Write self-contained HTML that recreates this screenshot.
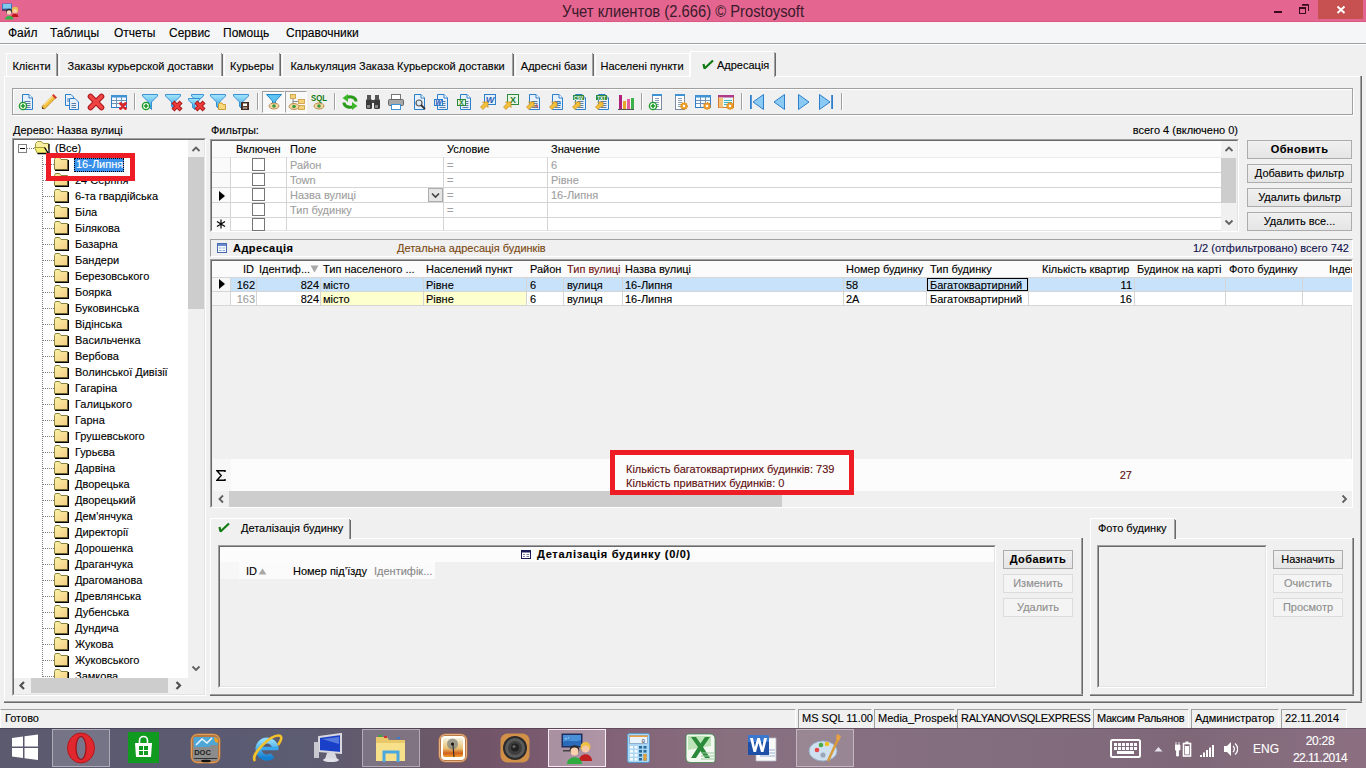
<!DOCTYPE html><html><head><meta charset="utf-8"><style>
html,body{margin:0;padding:0;width:1366px;height:768px;overflow:hidden;background:#F0F0F0;font-family:'Liberation Sans', sans-serif;font-size:11px;position:relative}
div{box-sizing:border-box}
body div{-webkit-text-stroke:0.12px currentColor}
.sv{position:absolute}
</style></head><body>
<div style="position:absolute;left:0px;top:0px;width:1366px;height:22px;background:#E4658F"></div>
<div style="position:absolute;left:0px;top:21px;width:1366px;height:1px;background:#D65C84"></div>
<div style="position:absolute;left:562px;top:3px;font-size:16px;line-height:18px;color:#3A1A2C;white-space:nowrap;-webkit-text-stroke:0;transform:scaleX(0.923);transform-origin:0 0">Учет клиентов (2.666) © Prostoysoft</div>
<div style="position:absolute;left:1318px;top:0px;width:45px;height:19px;background:#C75050"></div>
<svg class="sv" style="left:1318px;top:0" width="45" height="19"><path d="M19.5 6.5 L26.5 13 M26.5 6.5 L19.5 13" stroke="#fff" stroke-width="2"/></svg>
<div style="position:absolute;left:1274px;top:11px;width:8px;height:2px;background:#3a0a1e"></div>
<svg class="sv" style="left:1297px;top:2px" width="14" height="14"><rect x="2.5" y="5.5" width="6" height="6" fill="none" stroke="#3a0a1e"/><rect x="2" y="5" width="7" height="2" fill="#3a0a1e"/><path d="M5 2.5 H11.5 V9" fill="none" stroke="#3a0a1e"/><path d="M5 3 H11" stroke="#3a0a1e" stroke-width="1.5"/></svg>
<svg class="sv" style="left:2px;top:3px" width="18" height="17"><rect x="0" y="0.5" width="10" height="7" fill="#3A78C0"/><rect x="1" y="1" width="8" height="4.5" fill="#7FC8EE"/><rect x="0" y="6.5" width="10" height="1.2" fill="#5A2040"/><circle cx="13" cy="7" r="3.2" fill="#E8C050"/><circle cx="13" cy="8" r="2" fill="#F5D0B0"/><path d="M9.5 14 C9.5 9.5 16.5 9.5 16.5 14 Z" fill="#C01818"/><circle cx="7" cy="8.5" r="2.8" fill="#2A2A2A"/><circle cx="7" cy="9.5" r="2.3" fill="#F5D8C0"/><path d="M3 16.5 C3 11.5 11.5 11.5 11.5 16.5 Z" fill="#3AB04A"/></svg>
<div style="position:absolute;left:0px;top:22px;width:1366px;height:21px;background:#F5F6F7"></div>
<div style="position:absolute;left:0px;top:22px;width:1366px;height:1px;background:#FCEFF5"></div>
<div style="position:absolute;left:0px;top:43px;width:1366px;height:1px;background:#A0A0A0"></div>
<div style="position:absolute;left:0px;top:44px;width:1366px;height:1px;background:#FFFFFF"></div>
<div style="position:absolute;left:8px;top:26px;font-size:12px;line-height:14px;color:#000;white-space:nowrap;">Файл</div>
<div style="position:absolute;left:50px;top:26px;font-size:12px;line-height:14px;color:#000;white-space:nowrap;">Таблицы</div>
<div style="position:absolute;left:114px;top:26px;font-size:12px;line-height:14px;color:#000;white-space:nowrap;">Отчеты</div>
<div style="position:absolute;left:169px;top:26px;font-size:12px;line-height:14px;color:#000;white-space:nowrap;">Сервис</div>
<div style="position:absolute;left:223px;top:26px;font-size:12px;line-height:14px;color:#000;white-space:nowrap;">Помощь</div>
<div style="position:absolute;left:286px;top:26px;font-size:12px;line-height:14px;color:#000;white-space:nowrap;">Справочники</div>
<div style="position:absolute;left:6px;top:53px;width:52px;height:23px;border-top:1px solid #fff;border-left:1px solid #fff;"></div>
<div style="position:absolute;left:56px;top:53px;width:1px;height:23px;background:#A0A0A0"></div>
<div style="position:absolute;left:57px;top:54px;width:1px;height:22px;background:#696969"></div>
<div style="position:absolute;left:6px;top:60px;width:51px;text-align:center;font-size:11px;line-height:13px;white-space:nowrap">Клієнти</div>
<div style="position:absolute;left:59px;top:53px;width:164px;height:23px;border-top:1px solid #fff;border-left:1px solid #fff;"></div>
<div style="position:absolute;left:221px;top:53px;width:1px;height:23px;background:#A0A0A0"></div>
<div style="position:absolute;left:222px;top:54px;width:1px;height:22px;background:#696969"></div>
<div style="position:absolute;left:59px;top:60px;width:163px;text-align:center;font-size:11px;line-height:13px;white-space:nowrap">Заказы курьерской доставки</div>
<div style="position:absolute;left:224px;top:53px;width:57px;height:23px;border-top:1px solid #fff;border-left:1px solid #fff;"></div>
<div style="position:absolute;left:279px;top:53px;width:1px;height:23px;background:#A0A0A0"></div>
<div style="position:absolute;left:280px;top:54px;width:1px;height:22px;background:#696969"></div>
<div style="position:absolute;left:224px;top:60px;width:56px;text-align:center;font-size:11px;line-height:13px;white-space:nowrap">Курьеры</div>
<div style="position:absolute;left:282px;top:53px;width:232px;height:23px;border-top:1px solid #fff;border-left:1px solid #fff;"></div>
<div style="position:absolute;left:512px;top:53px;width:1px;height:23px;background:#A0A0A0"></div>
<div style="position:absolute;left:513px;top:54px;width:1px;height:22px;background:#696969"></div>
<div style="position:absolute;left:282px;top:60px;width:231px;text-align:center;font-size:11px;line-height:13px;white-space:nowrap">Калькуляция Заказа Курьерской доставки</div>
<div style="position:absolute;left:515px;top:53px;width:79px;height:23px;border-top:1px solid #fff;border-left:1px solid #fff;"></div>
<div style="position:absolute;left:592px;top:53px;width:1px;height:23px;background:#A0A0A0"></div>
<div style="position:absolute;left:593px;top:54px;width:1px;height:22px;background:#696969"></div>
<div style="position:absolute;left:515px;top:60px;width:78px;text-align:center;font-size:11px;line-height:13px;white-space:nowrap">Адресні бази</div>
<div style="position:absolute;left:595px;top:53px;width:95px;height:23px;border-top:1px solid #fff;border-left:1px solid #fff;"></div>
<div style="position:absolute;left:689px;top:53px;width:1px;height:23px;background:#fff"></div>
<div style="position:absolute;left:595px;top:60px;width:94px;text-align:center;font-size:11px;line-height:13px;white-space:nowrap">Населені пункти</div>
<div style="position:absolute;left:690px;top:51px;width:86px;height:26px;background:#F0F0F0;border-top:1px solid #fff;border-left:1px solid #fff;"></div>
<div style="position:absolute;left:774px;top:52px;width:1px;height:25px;background:#A0A0A0"></div>
<div style="position:absolute;left:775px;top:53px;width:1px;height:23px;background:#696969"></div>
<svg class="sv" style="left:702px;top:59px" width="12" height="11"><path d="M1.5 5 L2.5 9.5 L11 1.5" fill="none" stroke="#127A12" stroke-width="2.2" stroke-linejoin="bevel"/></svg>
<div style="position:absolute;left:717px;top:59px;font-size:11px;line-height:13px;color:#000;white-space:nowrap;">Адресація</div>
<div style="position:absolute;left:4px;top:76px;width:686px;height:1px;background:#fff"></div>
<div style="position:absolute;left:776px;top:76px;width:586px;height:1px;background:#fff"></div>
<div style="position:absolute;left:4px;top:76px;width:1px;height:627px;background:#fff"></div>
<div style="position:absolute;left:1360px;top:76px;width:1px;height:627px;background:#A0A0A0"></div>
<div style="position:absolute;left:1361px;top:76px;width:1px;height:627px;background:#696969"></div>
<div style="position:absolute;left:4px;top:701px;width:1358px;height:1px;background:#A0A0A0"></div>
<div style="position:absolute;left:4px;top:702px;width:1358px;height:1px;background:#696969"></div>
<div style="position:absolute;left:13px;top:89px;width:1341px;height:27px;border:1px solid #fff;"></div>
<div style="position:absolute;left:12px;top:88px;width:1341px;height:27px;border:1px solid #A0A0A0;"></div>
<div style="position:absolute;left:134px;top:93px;width:1px;height:17px;background:#A0A0A0"></div>
<div style="position:absolute;left:135px;top:93px;width:1px;height:17px;background:#fff"></div>
<div style="position:absolute;left:257px;top:93px;width:1px;height:17px;background:#A0A0A0"></div>
<div style="position:absolute;left:258px;top:93px;width:1px;height:17px;background:#fff"></div>
<div style="position:absolute;left:334px;top:93px;width:1px;height:17px;background:#A0A0A0"></div>
<div style="position:absolute;left:335px;top:93px;width:1px;height:17px;background:#fff"></div>
<div style="position:absolute;left:641px;top:93px;width:1px;height:17px;background:#A0A0A0"></div>
<div style="position:absolute;left:642px;top:93px;width:1px;height:17px;background:#fff"></div>
<div style="position:absolute;left:741px;top:93px;width:1px;height:17px;background:#A0A0A0"></div>
<div style="position:absolute;left:742px;top:93px;width:1px;height:17px;background:#fff"></div>
<div style="position:absolute;left:841px;top:93px;width:1px;height:17px;background:#A0A0A0"></div>
<div style="position:absolute;left:842px;top:93px;width:1px;height:17px;background:#fff"></div>
<div style="position:absolute;left:262px;top:91px;width:23px;height:22px;border-top:1px solid #A0A0A0;border-left:1px solid #A0A0A0;border-right:1px solid #fff;border-bottom:1px solid #fff;background:#F8F8F8"></div>
<div style="position:absolute;left:285px;top:91px;width:22px;height:22px;border-top:1px solid #A0A0A0;border-left:1px solid #A0A0A0;border-right:1px solid #fff;border-bottom:1px solid #fff;background:#F8F8F8"></div>
<svg class="sv" style="left:19px;top:94px" width="16" height="16" viewBox="0 0 16 16" overflow="visible"><path d="M3.5 0.5 H10 L13.5 4 V15.5 H3.5 Z" fill="#E6F1FB" stroke="#2E7FCB"/><path d="M10 0.5 V4 H13.5" fill="#fff" stroke="#2E7FCB"/><path d="M5.5 7.5 H11.5 M5.5 9.5 H11.5 M5.5 11.5 H11.5 M5.5 13.5 H11.5" stroke="#5a7fa6"/><circle cx="4" cy="12" r="3.6" fill="#fff" stroke="#1E9A2A" stroke-width="1.4"/><path d="M1.7999999999999998 12 H6.2 M4 9.8 V14.2" stroke="#1E9A2A" stroke-width="1.6"/></svg>
<svg class="sv" style="left:41px;top:94px" width="16" height="16" viewBox="0 0 16 16" overflow="visible"><path d="M3.5 15 L1.5 14.5 L1 12.5 L11.5 2 L14 4.5 Z" fill="#F3BE3A" stroke="#B8801A" stroke-width="0.8"/><path d="M3 11 L12.5 1.5" stroke="#FCE38A" stroke-width="1.2"/><path d="M11 1.5 L12.5 0 L16 3.5 L14.5 5 Z" fill="#D33A2A"/><path d="M1 12.5 L1 15 L3.5 15 Z" fill="#5a4a3a"/></svg>
<svg class="sv" style="left:64px;top:94px" width="16" height="16" viewBox="0 0 16 16" overflow="visible"><path d="M1.5 0.5 H7 L9.5 3 V11.5 H1.5 Z" fill="#E6F1FB" stroke="#2E7FCB"/><path d="M5.5 4.5 H11 L14.5 8 V15.5 H5.5 Z" fill="#E6F1FB" stroke="#2E7FCB"/><path d="M7.5 9.5 H12 M7.5 11.5 H12 M7.5 13.5 H12 M3 5 H5 M3 7 H5" stroke="#5a7fa6"/></svg>
<svg class="sv" style="left:88px;top:94px" width="16" height="16" viewBox="0 0 16 16" overflow="visible"><path d="M2.5 2.5 L13.5 13.5 M13.5 2.5 L2.5 13.5" stroke="#A8161A" stroke-width="5.6" stroke-linecap="round"/><path d="M2.5 2.5 L13.5 13.5 M13.5 2.5 L2.5 13.5" stroke="#F04444" stroke-width="3.6" stroke-linecap="round"/></svg>
<svg class="sv" style="left:111px;top:94px" width="16" height="16" viewBox="0 0 16 16" overflow="visible"><rect x="0.5" y="1.5" width="15" height="12" fill="#F4FAFF" stroke="#2E7FCB"/><rect x="0" y="1" width="16" height="2.5" fill="#3D93D6"/><path d="M1 6.5 H15 M1 9.5 H15 M5.5 3 V13 M10.5 3 V13" stroke="#6D93B8"/><path d="M9.5 9.5 L14.5 14.5 M14.5 9.5 L9.5 14.5" stroke="#D8262A" stroke-width="3" stroke-linecap="round"/></svg>
<svg class="sv" style="left:142px;top:94px" width="16" height="16" viewBox="0 0 16 16" overflow="visible"><defs><linearGradient id="fung" x1="0" y1="0" x2="0" y2="1"><stop offset="0" stop-color="#A6E6FC"/><stop offset="1" stop-color="#2E9EE0"/></linearGradient></defs><path d="M0.5 0.5 H15.5 V2 L9.5 8 V15.5 L6.5 12.5 V8 L0.5 2 Z" fill="url(#fung)" stroke="#2A88D0" stroke-width="0.9"/><circle cx="4" cy="12" r="3.6" fill="#fff" stroke="#1E9A2A" stroke-width="1.4"/><path d="M1.7999999999999998 12 H6.2 M4 9.8 V14.2" stroke="#1E9A2A" stroke-width="1.6"/></svg>
<svg class="sv" style="left:165px;top:94px" width="16" height="16" viewBox="0 0 16 16" overflow="visible"><defs><linearGradient id="fung" x1="0" y1="0" x2="0" y2="1"><stop offset="0" stop-color="#A6E6FC"/><stop offset="1" stop-color="#2E9EE0"/></linearGradient></defs><path d="M0.5 0.5 H15.5 V2 L9.5 8 V15.5 L6.5 12.5 V8 L0.5 2 Z" fill="url(#fung)" stroke="#2A88D0" stroke-width="0.9"/><path d="M9.4 9.4 L14.6 14.6 M14.6 9.4 L9.4 14.6" stroke="#A81818" stroke-width="4.2" stroke-linecap="square"/><path d="M9.4 9.4 L14.6 14.6 M14.6 9.4 L9.4 14.6" stroke="#EE3A3A" stroke-width="2.4" stroke-linecap="square"/></svg>
<svg class="sv" style="left:188px;top:94px" width="16" height="16" viewBox="0 0 16 16" overflow="visible"><defs><linearGradient id="fung" x1="0" y1="0" x2="0" y2="1"><stop offset="0" stop-color="#A6E6FC"/><stop offset="1" stop-color="#2E9EE0"/></linearGradient></defs><path d="M3.5 0.5 H15.5 V2 L10.5 6.5 V13 L8 11 V6.5 L3.5 2 Z" fill="url(#fung)" stroke="#2A88D0" stroke-width="0.9"/><path d="M0.5 4.5 H11.5 V6 L7 10 V15.5 L4.5 13.5 V10 L0.5 6 Z" fill="url(#fung)" stroke="#2A88D0" stroke-width="0.9"/><path d="M9.4 9.4 L14.6 14.6 M14.6 9.4 L9.4 14.6" stroke="#A81818" stroke-width="4.2" stroke-linecap="square"/><path d="M9.4 9.4 L14.6 14.6 M14.6 9.4 L9.4 14.6" stroke="#EE3A3A" stroke-width="2.4" stroke-linecap="square"/></svg>
<svg class="sv" style="left:210px;top:94px" width="16" height="16" viewBox="0 0 16 16" overflow="visible"><defs><linearGradient id="fung" x1="0" y1="0" x2="0" y2="1"><stop offset="0" stop-color="#A6E6FC"/><stop offset="1" stop-color="#2E9EE0"/></linearGradient></defs><path d="M0.5 0.5 H15.5 V2 L9.5 8 V15.5 L6.5 12.5 V8 L0.5 2 Z" fill="url(#fung)" stroke="#2A88D0" stroke-width="0.9"/><path d="M8.5 15.5 V10 L9.5 9 H12 L13 10.5 H15.5 V15.5 Z" fill="#F8D878" stroke="#C9962A" stroke-width="0.9"/></svg>
<svg class="sv" style="left:233px;top:94px" width="16" height="16" viewBox="0 0 16 16" overflow="visible"><defs><linearGradient id="fung" x1="0" y1="0" x2="0" y2="1"><stop offset="0" stop-color="#A6E6FC"/><stop offset="1" stop-color="#2E9EE0"/></linearGradient></defs><path d="M0.5 0.5 H15.5 V2 L9.5 8 V15.5 L6.5 12.5 V8 L0.5 2 Z" fill="url(#fung)" stroke="#2A88D0" stroke-width="0.9"/><rect x="8.5" y="8.5" width="7" height="7" fill="#5A3A2A" stroke="#3E2A20"/><rect x="10" y="9.5" width="4" height="2.5" fill="#fff"/><rect x="10" y="13" width="4" height="2" fill="#9a8a80"/></svg>
<svg class="sv" style="left:266px;top:94px" width="16" height="16" viewBox="0 0 16 16" overflow="visible"><path d="M0.5 0.5 H15.5 L9.5 7 V9 H6.5 V7 Z" fill="#5EC3F0" stroke="#1C86C9"/><ellipse cx="8" cy="12" rx="5" ry="3" fill="#F2D7A6" stroke="#B07A30" stroke-width="0.8"/><circle cx="8" cy="12" r="1.8" fill="#3C9A3C"/></svg>
<svg class="sv" style="left:289px;top:94px" width="16" height="16" viewBox="0 0 16 16" overflow="visible"><rect x="1.5" y="0.5" width="5" height="4" fill="#F5D27A" stroke="#C99A3A" stroke-width="0.8"/><rect x="9.5" y="5.5" width="6" height="4" fill="#F5D27A" stroke="#C99A3A" stroke-width="0.8"/><rect x="9.5" y="11.5" width="6" height="4" fill="#F5D27A" stroke="#C99A3A" stroke-width="0.8"/><path d="M4 5 V13.5 H9 M4 7.5 H9" stroke="#888" fill="none"/><ellipse cx="5" cy="12.5" rx="5" ry="3" fill="#F2D7A6" stroke="#B07A30" stroke-width="0.8"/><circle cx="5" cy="12.5" r="1.8" fill="#3C9A3C"/></svg>
<svg class="sv" style="left:311px;top:94px" width="16" height="16" viewBox="0 0 16 16" overflow="visible"><text x="8" y="7" font-family="Liberation Sans" font-weight="bold" font-size="8.5" fill="#137A13" text-anchor="middle" textLength="16" lengthAdjust="spacingAndGlyphs">SQL</text><ellipse cx="8" cy="12" rx="5" ry="3" fill="#F2D7A6" stroke="#B07A30" stroke-width="0.8"/><circle cx="8" cy="12" r="1.8" fill="#3C9A3C"/></svg>
<svg class="sv" style="left:342px;top:94px" width="16" height="16" viewBox="0 0 16 16" overflow="visible"><path d="M14 7.5 C14 3 8 2 5 3.5" fill="none" stroke="#2A9A1A" stroke-width="3"/><path d="M0.5 4 L6 0 V8 Z" fill="#3CB82A"/><path d="M2 8.5 C2 13 8 14 11 12.5" fill="none" stroke="#2A9A1A" stroke-width="3"/><path d="M15.5 12 L10 16 V8 Z" fill="#3CB82A"/></svg>
<svg class="sv" style="left:365px;top:94px" width="16" height="16" viewBox="0 0 16 16" overflow="visible"><rect x="1" y="5" width="6" height="10" rx="1.5" fill="#3A3A3A"/><rect x="9" y="5" width="6" height="10" rx="1.5" fill="#3A3A3A"/><rect x="2" y="1" width="4" height="5" fill="#555"/><rect x="10" y="1" width="4" height="5" fill="#555"/><rect x="6" y="6" width="4" height="3" fill="#444"/><rect x="2" y="11" width="3" height="3" fill="#888"/><rect x="10" y="11" width="3" height="3" fill="#888"/></svg>
<svg class="sv" style="left:388px;top:94px" width="16" height="16" viewBox="0 0 16 16" overflow="visible"><rect x="3.5" y="0.5" width="9" height="5" fill="#fff" stroke="#777"/><rect x="0.5" y="5.5" width="15" height="6" rx="1" fill="#A8A8A8" stroke="#666"/><rect x="3.5" y="10.5" width="9" height="5" fill="#fff" stroke="#3D93D6"/></svg>
<svg class="sv" style="left:411px;top:94px" width="16" height="16" viewBox="0 0 16 16" overflow="visible"><path d="M3.5 0.5 H10 L13.5 4 V15.5 H3.5 Z" fill="#E6F1FB" stroke="#2E7FCB"/><path d="M10 0.5 V4 H13.5" fill="#fff" stroke="#2E7FCB"/><circle cx="8" cy="9" r="3" fill="#DDEBF5" stroke="#555" stroke-width="1.2"/><path d="M10 11 L14 15" stroke="#333" stroke-width="1.8"/></svg>
<svg class="sv" style="left:434px;top:94px" width="16" height="16" viewBox="0 0 16 16" overflow="visible"><path d="M3.5 0.5 H10 L13.5 4 V15.5 H3.5 Z" fill="#E6F1FB" stroke="#2E7FCB"/><path d="M10 0.5 V4 H13.5" fill="#fff" stroke="#2E7FCB"/><path d="M5.5 7.5 H11.5 M5.5 9.5 H11.5 M5.5 11.5 H11.5 M5.5 13.5 H11.5" stroke="#5a7fa6"/><rect x="0.5" y="5.5" width="8" height="6" fill="#D8ECFA" stroke="#2E7FCB"/><text x="4.5" y="10.5" font-family="Liberation Sans" font-weight="bold" font-style="italic" font-size="6.5" fill="#1A4FB0" text-anchor="middle">W</text></svg>
<svg class="sv" style="left:457px;top:94px" width="16" height="16" viewBox="0 0 16 16" overflow="visible"><path d="M3.5 0.5 H10 L13.5 4 V15.5 H3.5 Z" fill="#E6F1FB" stroke="#2E7FCB"/><path d="M10 0.5 V4 H13.5" fill="#fff" stroke="#2E7FCB"/><path d="M5.5 7.5 H11.5 M5.5 9.5 H11.5 M5.5 11.5 H11.5 M5.5 13.5 H11.5" stroke="#5a7fa6"/><rect x="0.5" y="5.5" width="8" height="6" fill="#E0F4E0" stroke="#2A8A3A"/><text x="4.5" y="10.5" font-family="Liberation Sans" font-weight="bold" font-size="6.5" fill="#1A7A2A" text-anchor="middle">X</text></svg>
<svg class="sv" style="left:480px;top:94px" width="16" height="16" viewBox="0 0 16 16" overflow="visible"><rect x="4.5" y="0.5" width="11" height="10" fill="#E6F1FB" stroke="#2E7FCB"/><text x="10" y="9" font-family="Liberation Sans" font-weight="bold" font-style="italic" font-size="9" fill="#2B5FB8" text-anchor="middle">W</text><path d="M0.5 13 L4 9.5 L2.5 8 H8 V13.5 L6.5 12 L3 15.5 Z" fill="#F2C03A" stroke="#C88A1A" stroke-width="0.7"/></svg>
<svg class="sv" style="left:503px;top:94px" width="16" height="16" viewBox="0 0 16 16" overflow="visible"><rect x="4.5" y="0.5" width="11" height="10" fill="#E8F5E8" stroke="#2E8B3E"/><text x="10" y="9" font-family="Liberation Sans" font-weight="bold" font-size="9" fill="#1D7A2D" text-anchor="middle">X</text><path d="M0.5 13 L4 9.5 L2.5 8 H8 V13.5 L6.5 12 L3 15.5 Z" fill="#F2C03A" stroke="#C88A1A" stroke-width="0.7"/></svg>
<svg class="sv" style="left:526px;top:94px" width="16" height="16" viewBox="0 0 16 16" overflow="visible"><path d="M3.5 0.5 H10 L13.5 4 V15.5 H3.5 Z" fill="#E6F1FB" stroke="#2E7FCB"/><path d="M10 0.5 V4 H13.5" fill="#fff" stroke="#2E7FCB"/><path d="M5.5 7.5 H11.5 M5.5 9.5 H11.5 M5.5 11.5 H11.5 M5.5 13.5 H11.5" stroke="#5a7fa6"/><text x="10.5" y="14" font-family="Liberation Serif" font-style="italic" font-size="7" fill="#C33" text-anchor="middle">A</text><path d="M0.5 13 L4 9.5 L2.5 8 H8 V13.5 L6.5 12 L3 15.5 Z" fill="#F2C03A" stroke="#C88A1A" stroke-width="0.7"/></svg>
<svg class="sv" style="left:549px;top:94px" width="16" height="16" viewBox="0 0 16 16" overflow="visible"><path d="M3.5 0.5 H10 L13.5 4 V15.5 H3.5 Z" fill="#E6F1FB" stroke="#2E7FCB"/><path d="M10 0.5 V4 H13.5" fill="#fff" stroke="#2E7FCB"/><path d="M5.5 7.5 H11.5 M5.5 9.5 H11.5 M5.5 11.5 H11.5 M5.5 13.5 H11.5" stroke="#5a7fa6"/><text x="9.5" y="12" font-family="Liberation Sans" font-weight="bold" font-size="9" fill="#2E7FCB" text-anchor="middle">e</text><path d="M0.5 13 L4 9.5 L2.5 8 H8 V13.5 L6.5 12 L3 15.5 Z" fill="#F2C03A" stroke="#C88A1A" stroke-width="0.7"/></svg>
<svg class="sv" style="left:572px;top:94px" width="16" height="16" viewBox="0 0 16 16" overflow="visible"><path d="M3.5 0.5 H10 L13.5 4 V15.5 H3.5 Z" fill="#E6F1FB" stroke="#2E7FCB"/><path d="M10 0.5 V4 H13.5" fill="#fff" stroke="#2E7FCB"/><path d="M5.5 7.5 H11.5 M5.5 9.5 H11.5 M5.5 11.5 H11.5 M5.5 13.5 H11.5" stroke="#5a7fa6"/><rect x="1" y="1" width="11" height="5" fill="#2E8B3E"/><text x="6.5" y="5.5" font-family="Liberation Sans" font-weight="bold" font-size="4.5" fill="#fff" text-anchor="middle">CSV</text><path d="M0.5 13 L4 9.5 L2.5 8 H8 V13.5 L6.5 12 L3 15.5 Z" fill="#F2C03A" stroke="#C88A1A" stroke-width="0.7"/></svg>
<svg class="sv" style="left:595px;top:94px" width="16" height="16" viewBox="0 0 16 16" overflow="visible"><path d="M3.5 0.5 H10 L13.5 4 V15.5 H3.5 Z" fill="#E6F1FB" stroke="#2E7FCB"/><path d="M10 0.5 V4 H13.5" fill="#fff" stroke="#2E7FCB"/><path d="M5.5 7.5 H11.5 M5.5 9.5 H11.5 M5.5 11.5 H11.5 M5.5 13.5 H11.5" stroke="#5a7fa6"/><rect x="1" y="1" width="11" height="5" fill="#2E8B3E"/><text x="6.5" y="5.5" font-family="Liberation Sans" font-weight="bold" font-size="4.5" fill="#fff" text-anchor="middle">TXT</text><path d="M0.5 13 L4 9.5 L2.5 8 H8 V13.5 L6.5 12 L3 15.5 Z" fill="#F2C03A" stroke="#C88A1A" stroke-width="0.7"/></svg>
<svg class="sv" style="left:618px;top:94px" width="16" height="16" viewBox="0 0 16 16" overflow="visible"><rect x="1" y="1" width="3" height="14" fill="#B0207A"/><rect x="5" y="7" width="3" height="8" fill="#E7A62A"/><rect x="9" y="5" width="3" height="10" fill="#E35E9A"/><rect x="13" y="4" width="3" height="11" fill="#3CB04A"/><path d="M0 15.5 H16" stroke="#555"/></svg>
<svg class="sv" style="left:649px;top:94px" width="16" height="16" viewBox="0 0 16 16" overflow="visible"><rect x="3.5" y="0.5" width="9" height="15" fill="#fff" stroke="#7C8BA0"/><rect x="3" y="0" width="10" height="2" fill="#3D93D6"/><path d="M6 4.5 H10 M6 6.5 H10 M6 8.5 H10 M6 10.5 H10 M6 12.5 H10" stroke="#8aa0b8"/><circle cx="4" cy="12" r="3.6" fill="#fff" stroke="#1E9A2A" stroke-width="1.4"/><path d="M1.7999999999999998 12 H6.2 M4 9.8 V14.2" stroke="#1E9A2A" stroke-width="1.6"/></svg>
<svg class="sv" style="left:672px;top:94px" width="16" height="16" viewBox="0 0 16 16" overflow="visible"><rect x="3.5" y="0.5" width="9" height="15" fill="#fff" stroke="#7C8BA0"/><rect x="3" y="0" width="10" height="2" fill="#3D93D6"/><path d="M6 4.5 H10 M6 6.5 H10 M6 8.5 H10 M6 10.5 H10 M6 12.5 H10" stroke="#8aa0b8"/><circle cx="12" cy="12" r="3.2" fill="#F0A030" stroke="#E08A10" stroke-width="1.4" stroke-dasharray="1.2 0.9"/><circle cx="12" cy="12" r="1.2" fill="#fff"/></svg>
<svg class="sv" style="left:695px;top:94px" width="16" height="16" viewBox="0 0 16 16" overflow="visible"><rect x="0.5" y="1.5" width="15" height="12" fill="#F4FAFF" stroke="#2E7FCB"/><rect x="0" y="1" width="16" height="2.5" fill="#3D93D6"/><path d="M1 6.5 H15 M1 9.5 H15 M5.5 3 V13 M10.5 3 V13" stroke="#6D93B8"/><circle cx="12" cy="12" r="3.2" fill="#F0A030" stroke="#E08A10" stroke-width="1.4" stroke-dasharray="1.2 0.9"/><circle cx="12" cy="12" r="1.2" fill="#fff"/></svg>
<svg class="sv" style="left:718px;top:94px" width="16" height="16" viewBox="0 0 16 16" overflow="visible"><rect x="0.5" y="1.5" width="15" height="12" fill="#E9FBFB" stroke="#D27A2A"/><rect x="0" y="1" width="16" height="2.5" fill="#B03A8A"/><rect x="1" y="3.5" width="4" height="10" fill="#F5C27A"/><path d="M6 6.5 H14 M6 8.5 H14 M6 10.5 H14" stroke="#3AAFC0"/><circle cx="12" cy="12" r="3.2" fill="#F0A030" stroke="#E08A10" stroke-width="1.4" stroke-dasharray="1.2 0.9"/><circle cx="12" cy="12" r="1.2" fill="#fff"/></svg>
<svg class="sv" style="left:749px;top:94px" width="16" height="16" viewBox="0 0 16 16" overflow="visible"><rect x="1" y="1" width="1.8" height="14" fill="#2E7FCB"/><path d="M14.5 0.5 V15.5 L4 8 Z" fill="#8BCBF3" stroke="#2E7FCB"/></svg>
<svg class="sv" style="left:772px;top:94px" width="16" height="16" viewBox="0 0 16 16" overflow="visible"><path d="M12.5 0.5 V15.5 L2 8 Z" fill="#8BCBF3" stroke="#2E7FCB"/></svg>
<svg class="sv" style="left:795px;top:94px" width="16" height="16" viewBox="0 0 16 16" overflow="visible"><path d="M3.5 0.5 V15.5 L14 8 Z" fill="#8BCBF3" stroke="#2E7FCB"/></svg>
<svg class="sv" style="left:818px;top:94px" width="16" height="16" viewBox="0 0 16 16" overflow="visible"><path d="M1.5 0.5 V15.5 L12 8 Z" fill="#8BCBF3" stroke="#2E7FCB"/><rect x="13.2" y="1" width="1.8" height="14" fill="#2E7FCB"/></svg>
<div style="position:absolute;left:13px;top:124px;font-size:11px;line-height:13px;color:#000;white-space:nowrap;">Дерево: Назва вулиці</div>
<div style="position:absolute;left:12px;top:138px;width:194px;height:558px;background:#fff;border-top:1px solid #A0A0A0;border-left:1px solid #A0A0A0;border-right:1px solid #fff;border-bottom:1px solid #fff;"></div>
<div style="position:absolute;left:13px;top:139px;width:192px;height:556px;border-top:1px solid #696969;border-left:1px solid #696969;border-right:1px solid #E3E3E3;border-bottom:1px solid #E3E3E3;"></div>
<div style="position:absolute;left:188px;top:140px;width:16px;height:538px;background:#F0F0F0"></div>
<div style="position:absolute;left:188px;top:157px;width:16px;height:152px;background:#CDCDCD"></div>
<svg class="sv" style="left:188px;top:141px" width="16" height="16"><path d="M4.5 10 L8 6.5 L11.5 10" fill="none" stroke="#606060" stroke-width="1.8"/></svg>
<svg class="sv" style="left:188px;top:660px" width="16" height="16"><path d="M4.5 6.5 L8 10 L11.5 6.5" fill="none" stroke="#606060" stroke-width="1.8"/></svg>
<div style="position:absolute;left:14px;top:678px;width:174px;height:16px;background:#F0F0F0"></div>
<div style="position:absolute;left:188px;top:678px;width:16px;height:16px;background:#F0F0F0"></div>
<div style="position:absolute;left:31px;top:678px;width:137px;height:15px;background:#CDCDCD"></div>
<svg class="sv" style="left:14px;top:678px" width="16" height="15"><path d="M10 4 L6.5 7.5 L10 11" fill="none" stroke="#505050" stroke-width="2.2"/></svg>
<svg class="sv" style="left:170px;top:678px" width="16" height="15"><path d="M6.5 4 L10 7.5 L6.5 11" fill="none" stroke="#505050" stroke-width="2.2"/></svg>
<div style="position:absolute;left:14px;top:140px;width:174px;height:538px;overflow:hidden">
<svg class="sv" style="left:0;top:0" width="174" height="538"><path d="M28.5 16 V537" stroke="#808080" stroke-dasharray="1 1"/><path d="M29 24.5 H40" stroke="#808080" stroke-dasharray="1 1"/><path d="M29 40.5 H40" stroke="#808080" stroke-dasharray="1 1"/><path d="M29 56.5 H40" stroke="#808080" stroke-dasharray="1 1"/><path d="M29 72.5 H40" stroke="#808080" stroke-dasharray="1 1"/><path d="M29 88.5 H40" stroke="#808080" stroke-dasharray="1 1"/><path d="M29 104.5 H40" stroke="#808080" stroke-dasharray="1 1"/><path d="M29 120.5 H40" stroke="#808080" stroke-dasharray="1 1"/><path d="M29 136.5 H40" stroke="#808080" stroke-dasharray="1 1"/><path d="M29 152.5 H40" stroke="#808080" stroke-dasharray="1 1"/><path d="M29 168.5 H40" stroke="#808080" stroke-dasharray="1 1"/><path d="M29 184.5 H40" stroke="#808080" stroke-dasharray="1 1"/><path d="M29 200.5 H40" stroke="#808080" stroke-dasharray="1 1"/><path d="M29 216.5 H40" stroke="#808080" stroke-dasharray="1 1"/><path d="M29 232.5 H40" stroke="#808080" stroke-dasharray="1 1"/><path d="M29 248.5 H40" stroke="#808080" stroke-dasharray="1 1"/><path d="M29 264.5 H40" stroke="#808080" stroke-dasharray="1 1"/><path d="M29 280.5 H40" stroke="#808080" stroke-dasharray="1 1"/><path d="M29 296.5 H40" stroke="#808080" stroke-dasharray="1 1"/><path d="M29 312.5 H40" stroke="#808080" stroke-dasharray="1 1"/><path d="M29 328.5 H40" stroke="#808080" stroke-dasharray="1 1"/><path d="M29 344.5 H40" stroke="#808080" stroke-dasharray="1 1"/><path d="M29 360.5 H40" stroke="#808080" stroke-dasharray="1 1"/><path d="M29 376.5 H40" stroke="#808080" stroke-dasharray="1 1"/><path d="M29 392.5 H40" stroke="#808080" stroke-dasharray="1 1"/><path d="M29 408.5 H40" stroke="#808080" stroke-dasharray="1 1"/><path d="M29 424.5 H40" stroke="#808080" stroke-dasharray="1 1"/><path d="M29 440.5 H40" stroke="#808080" stroke-dasharray="1 1"/><path d="M29 456.5 H40" stroke="#808080" stroke-dasharray="1 1"/><path d="M29 472.5 H40" stroke="#808080" stroke-dasharray="1 1"/><path d="M29 488.5 H40" stroke="#808080" stroke-dasharray="1 1"/><path d="M29 504.5 H40" stroke="#808080" stroke-dasharray="1 1"/><path d="M29 520.5 H40" stroke="#808080" stroke-dasharray="1 1"/><path d="M29 536.5 H40" stroke="#808080" stroke-dasharray="1 1"/><path d="M13 8.5 H20" stroke="#808080" stroke-dasharray="1 1"/></svg>
<svg class="sv" style="left:20px;top:1px" width="17" height="14"><path d="M1.5 9 V2.5 L3.5 0.5 H7.5 L9 2.5 H14.5 V8" fill="#F8EFA0" stroke="#A09A40"/><path d="M0.5 6.5 H10.5 L14.5 12.5 H3.5 Z" fill="#F6F070" stroke="#A09A40"/><path d="M3.5 12.5 H14 M10.5 6.5 L14.5 12.5" stroke="#000" stroke-width="1.3" fill="none"/><path d="M15 3 V13" stroke="#000" stroke-width="1.3"/></svg>
<div style="position:absolute;left:41px;top:2px;font-size:11px;line-height:13px;white-space:nowrap">(Все)</div>
<svg class="sv" style="left:40px;top:17px" width="15" height="14"><defs><linearGradient id="fg" x1="0" y1="0" x2="1" y2="1"><stop offset="0" stop-color="#FBF3A6"/><stop offset="1" stop-color="#F5CC84"/></linearGradient></defs><path d="M0.5 12.5 V2.5 L1.5 0.5 H5.5 L7 2.5 H13.5 V12.5 Z" fill="url(#fg)" stroke="#8B8443" stroke-width="1"/><path d="M1 13.4 H14.4 V3" stroke="#000" fill="none" stroke-width="1.3"/></svg>
<div style="position:absolute;left:60px;top:18px;width:50px;height:14px;background:#3890EA;border:1px dotted #000"></div>
<div style="position:absolute;left:62px;top:18px;font-size:11px;line-height:13px;white-space:nowrap;color:#fff">16-Липня</div>
<svg class="sv" style="left:40px;top:33px" width="15" height="14"><defs><linearGradient id="fg" x1="0" y1="0" x2="1" y2="1"><stop offset="0" stop-color="#FBF3A6"/><stop offset="1" stop-color="#F5CC84"/></linearGradient></defs><path d="M0.5 12.5 V2.5 L1.5 0.5 H5.5 L7 2.5 H13.5 V12.5 Z" fill="url(#fg)" stroke="#8B8443" stroke-width="1"/><path d="M1 13.4 H14.4 V3" stroke="#000" fill="none" stroke-width="1.3"/></svg>
<div style="position:absolute;left:61px;top:34px;font-size:11px;line-height:13px;white-space:nowrap">24 Серпня</div>
<svg class="sv" style="left:40px;top:49px" width="15" height="14"><defs><linearGradient id="fg" x1="0" y1="0" x2="1" y2="1"><stop offset="0" stop-color="#FBF3A6"/><stop offset="1" stop-color="#F5CC84"/></linearGradient></defs><path d="M0.5 12.5 V2.5 L1.5 0.5 H5.5 L7 2.5 H13.5 V12.5 Z" fill="url(#fg)" stroke="#8B8443" stroke-width="1"/><path d="M1 13.4 H14.4 V3" stroke="#000" fill="none" stroke-width="1.3"/></svg>
<div style="position:absolute;left:61px;top:50px;font-size:11px;line-height:13px;white-space:nowrap">6-та гвардійська</div>
<svg class="sv" style="left:40px;top:65px" width="15" height="14"><defs><linearGradient id="fg" x1="0" y1="0" x2="1" y2="1"><stop offset="0" stop-color="#FBF3A6"/><stop offset="1" stop-color="#F5CC84"/></linearGradient></defs><path d="M0.5 12.5 V2.5 L1.5 0.5 H5.5 L7 2.5 H13.5 V12.5 Z" fill="url(#fg)" stroke="#8B8443" stroke-width="1"/><path d="M1 13.4 H14.4 V3" stroke="#000" fill="none" stroke-width="1.3"/></svg>
<div style="position:absolute;left:61px;top:66px;font-size:11px;line-height:13px;white-space:nowrap">Біла</div>
<svg class="sv" style="left:40px;top:81px" width="15" height="14"><defs><linearGradient id="fg" x1="0" y1="0" x2="1" y2="1"><stop offset="0" stop-color="#FBF3A6"/><stop offset="1" stop-color="#F5CC84"/></linearGradient></defs><path d="M0.5 12.5 V2.5 L1.5 0.5 H5.5 L7 2.5 H13.5 V12.5 Z" fill="url(#fg)" stroke="#8B8443" stroke-width="1"/><path d="M1 13.4 H14.4 V3" stroke="#000" fill="none" stroke-width="1.3"/></svg>
<div style="position:absolute;left:61px;top:82px;font-size:11px;line-height:13px;white-space:nowrap">Білякова</div>
<svg class="sv" style="left:40px;top:97px" width="15" height="14"><defs><linearGradient id="fg" x1="0" y1="0" x2="1" y2="1"><stop offset="0" stop-color="#FBF3A6"/><stop offset="1" stop-color="#F5CC84"/></linearGradient></defs><path d="M0.5 12.5 V2.5 L1.5 0.5 H5.5 L7 2.5 H13.5 V12.5 Z" fill="url(#fg)" stroke="#8B8443" stroke-width="1"/><path d="M1 13.4 H14.4 V3" stroke="#000" fill="none" stroke-width="1.3"/></svg>
<div style="position:absolute;left:61px;top:98px;font-size:11px;line-height:13px;white-space:nowrap">Базарна</div>
<svg class="sv" style="left:40px;top:113px" width="15" height="14"><defs><linearGradient id="fg" x1="0" y1="0" x2="1" y2="1"><stop offset="0" stop-color="#FBF3A6"/><stop offset="1" stop-color="#F5CC84"/></linearGradient></defs><path d="M0.5 12.5 V2.5 L1.5 0.5 H5.5 L7 2.5 H13.5 V12.5 Z" fill="url(#fg)" stroke="#8B8443" stroke-width="1"/><path d="M1 13.4 H14.4 V3" stroke="#000" fill="none" stroke-width="1.3"/></svg>
<div style="position:absolute;left:61px;top:114px;font-size:11px;line-height:13px;white-space:nowrap">Бандери</div>
<svg class="sv" style="left:40px;top:129px" width="15" height="14"><defs><linearGradient id="fg" x1="0" y1="0" x2="1" y2="1"><stop offset="0" stop-color="#FBF3A6"/><stop offset="1" stop-color="#F5CC84"/></linearGradient></defs><path d="M0.5 12.5 V2.5 L1.5 0.5 H5.5 L7 2.5 H13.5 V12.5 Z" fill="url(#fg)" stroke="#8B8443" stroke-width="1"/><path d="M1 13.4 H14.4 V3" stroke="#000" fill="none" stroke-width="1.3"/></svg>
<div style="position:absolute;left:61px;top:130px;font-size:11px;line-height:13px;white-space:nowrap">Березовського</div>
<svg class="sv" style="left:40px;top:145px" width="15" height="14"><defs><linearGradient id="fg" x1="0" y1="0" x2="1" y2="1"><stop offset="0" stop-color="#FBF3A6"/><stop offset="1" stop-color="#F5CC84"/></linearGradient></defs><path d="M0.5 12.5 V2.5 L1.5 0.5 H5.5 L7 2.5 H13.5 V12.5 Z" fill="url(#fg)" stroke="#8B8443" stroke-width="1"/><path d="M1 13.4 H14.4 V3" stroke="#000" fill="none" stroke-width="1.3"/></svg>
<div style="position:absolute;left:61px;top:146px;font-size:11px;line-height:13px;white-space:nowrap">Боярка</div>
<svg class="sv" style="left:40px;top:161px" width="15" height="14"><defs><linearGradient id="fg" x1="0" y1="0" x2="1" y2="1"><stop offset="0" stop-color="#FBF3A6"/><stop offset="1" stop-color="#F5CC84"/></linearGradient></defs><path d="M0.5 12.5 V2.5 L1.5 0.5 H5.5 L7 2.5 H13.5 V12.5 Z" fill="url(#fg)" stroke="#8B8443" stroke-width="1"/><path d="M1 13.4 H14.4 V3" stroke="#000" fill="none" stroke-width="1.3"/></svg>
<div style="position:absolute;left:61px;top:162px;font-size:11px;line-height:13px;white-space:nowrap">Буковинська</div>
<svg class="sv" style="left:40px;top:177px" width="15" height="14"><defs><linearGradient id="fg" x1="0" y1="0" x2="1" y2="1"><stop offset="0" stop-color="#FBF3A6"/><stop offset="1" stop-color="#F5CC84"/></linearGradient></defs><path d="M0.5 12.5 V2.5 L1.5 0.5 H5.5 L7 2.5 H13.5 V12.5 Z" fill="url(#fg)" stroke="#8B8443" stroke-width="1"/><path d="M1 13.4 H14.4 V3" stroke="#000" fill="none" stroke-width="1.3"/></svg>
<div style="position:absolute;left:61px;top:178px;font-size:11px;line-height:13px;white-space:nowrap">Відінська</div>
<svg class="sv" style="left:40px;top:193px" width="15" height="14"><defs><linearGradient id="fg" x1="0" y1="0" x2="1" y2="1"><stop offset="0" stop-color="#FBF3A6"/><stop offset="1" stop-color="#F5CC84"/></linearGradient></defs><path d="M0.5 12.5 V2.5 L1.5 0.5 H5.5 L7 2.5 H13.5 V12.5 Z" fill="url(#fg)" stroke="#8B8443" stroke-width="1"/><path d="M1 13.4 H14.4 V3" stroke="#000" fill="none" stroke-width="1.3"/></svg>
<div style="position:absolute;left:61px;top:194px;font-size:11px;line-height:13px;white-space:nowrap">Васильченка</div>
<svg class="sv" style="left:40px;top:209px" width="15" height="14"><defs><linearGradient id="fg" x1="0" y1="0" x2="1" y2="1"><stop offset="0" stop-color="#FBF3A6"/><stop offset="1" stop-color="#F5CC84"/></linearGradient></defs><path d="M0.5 12.5 V2.5 L1.5 0.5 H5.5 L7 2.5 H13.5 V12.5 Z" fill="url(#fg)" stroke="#8B8443" stroke-width="1"/><path d="M1 13.4 H14.4 V3" stroke="#000" fill="none" stroke-width="1.3"/></svg>
<div style="position:absolute;left:61px;top:210px;font-size:11px;line-height:13px;white-space:nowrap">Вербова</div>
<svg class="sv" style="left:40px;top:225px" width="15" height="14"><defs><linearGradient id="fg" x1="0" y1="0" x2="1" y2="1"><stop offset="0" stop-color="#FBF3A6"/><stop offset="1" stop-color="#F5CC84"/></linearGradient></defs><path d="M0.5 12.5 V2.5 L1.5 0.5 H5.5 L7 2.5 H13.5 V12.5 Z" fill="url(#fg)" stroke="#8B8443" stroke-width="1"/><path d="M1 13.4 H14.4 V3" stroke="#000" fill="none" stroke-width="1.3"/></svg>
<div style="position:absolute;left:61px;top:226px;font-size:11px;line-height:13px;white-space:nowrap">Волинської Дивізії</div>
<svg class="sv" style="left:40px;top:241px" width="15" height="14"><defs><linearGradient id="fg" x1="0" y1="0" x2="1" y2="1"><stop offset="0" stop-color="#FBF3A6"/><stop offset="1" stop-color="#F5CC84"/></linearGradient></defs><path d="M0.5 12.5 V2.5 L1.5 0.5 H5.5 L7 2.5 H13.5 V12.5 Z" fill="url(#fg)" stroke="#8B8443" stroke-width="1"/><path d="M1 13.4 H14.4 V3" stroke="#000" fill="none" stroke-width="1.3"/></svg>
<div style="position:absolute;left:61px;top:242px;font-size:11px;line-height:13px;white-space:nowrap">Гагаріна</div>
<svg class="sv" style="left:40px;top:257px" width="15" height="14"><defs><linearGradient id="fg" x1="0" y1="0" x2="1" y2="1"><stop offset="0" stop-color="#FBF3A6"/><stop offset="1" stop-color="#F5CC84"/></linearGradient></defs><path d="M0.5 12.5 V2.5 L1.5 0.5 H5.5 L7 2.5 H13.5 V12.5 Z" fill="url(#fg)" stroke="#8B8443" stroke-width="1"/><path d="M1 13.4 H14.4 V3" stroke="#000" fill="none" stroke-width="1.3"/></svg>
<div style="position:absolute;left:61px;top:258px;font-size:11px;line-height:13px;white-space:nowrap">Галицького</div>
<svg class="sv" style="left:40px;top:273px" width="15" height="14"><defs><linearGradient id="fg" x1="0" y1="0" x2="1" y2="1"><stop offset="0" stop-color="#FBF3A6"/><stop offset="1" stop-color="#F5CC84"/></linearGradient></defs><path d="M0.5 12.5 V2.5 L1.5 0.5 H5.5 L7 2.5 H13.5 V12.5 Z" fill="url(#fg)" stroke="#8B8443" stroke-width="1"/><path d="M1 13.4 H14.4 V3" stroke="#000" fill="none" stroke-width="1.3"/></svg>
<div style="position:absolute;left:61px;top:274px;font-size:11px;line-height:13px;white-space:nowrap">Гарна</div>
<svg class="sv" style="left:40px;top:289px" width="15" height="14"><defs><linearGradient id="fg" x1="0" y1="0" x2="1" y2="1"><stop offset="0" stop-color="#FBF3A6"/><stop offset="1" stop-color="#F5CC84"/></linearGradient></defs><path d="M0.5 12.5 V2.5 L1.5 0.5 H5.5 L7 2.5 H13.5 V12.5 Z" fill="url(#fg)" stroke="#8B8443" stroke-width="1"/><path d="M1 13.4 H14.4 V3" stroke="#000" fill="none" stroke-width="1.3"/></svg>
<div style="position:absolute;left:61px;top:290px;font-size:11px;line-height:13px;white-space:nowrap">Грушевського</div>
<svg class="sv" style="left:40px;top:305px" width="15" height="14"><defs><linearGradient id="fg" x1="0" y1="0" x2="1" y2="1"><stop offset="0" stop-color="#FBF3A6"/><stop offset="1" stop-color="#F5CC84"/></linearGradient></defs><path d="M0.5 12.5 V2.5 L1.5 0.5 H5.5 L7 2.5 H13.5 V12.5 Z" fill="url(#fg)" stroke="#8B8443" stroke-width="1"/><path d="M1 13.4 H14.4 V3" stroke="#000" fill="none" stroke-width="1.3"/></svg>
<div style="position:absolute;left:61px;top:306px;font-size:11px;line-height:13px;white-space:nowrap">Гурьєва</div>
<svg class="sv" style="left:40px;top:321px" width="15" height="14"><defs><linearGradient id="fg" x1="0" y1="0" x2="1" y2="1"><stop offset="0" stop-color="#FBF3A6"/><stop offset="1" stop-color="#F5CC84"/></linearGradient></defs><path d="M0.5 12.5 V2.5 L1.5 0.5 H5.5 L7 2.5 H13.5 V12.5 Z" fill="url(#fg)" stroke="#8B8443" stroke-width="1"/><path d="M1 13.4 H14.4 V3" stroke="#000" fill="none" stroke-width="1.3"/></svg>
<div style="position:absolute;left:61px;top:322px;font-size:11px;line-height:13px;white-space:nowrap">Дарвіна</div>
<svg class="sv" style="left:40px;top:337px" width="15" height="14"><defs><linearGradient id="fg" x1="0" y1="0" x2="1" y2="1"><stop offset="0" stop-color="#FBF3A6"/><stop offset="1" stop-color="#F5CC84"/></linearGradient></defs><path d="M0.5 12.5 V2.5 L1.5 0.5 H5.5 L7 2.5 H13.5 V12.5 Z" fill="url(#fg)" stroke="#8B8443" stroke-width="1"/><path d="M1 13.4 H14.4 V3" stroke="#000" fill="none" stroke-width="1.3"/></svg>
<div style="position:absolute;left:61px;top:338px;font-size:11px;line-height:13px;white-space:nowrap">Дворецька</div>
<svg class="sv" style="left:40px;top:353px" width="15" height="14"><defs><linearGradient id="fg" x1="0" y1="0" x2="1" y2="1"><stop offset="0" stop-color="#FBF3A6"/><stop offset="1" stop-color="#F5CC84"/></linearGradient></defs><path d="M0.5 12.5 V2.5 L1.5 0.5 H5.5 L7 2.5 H13.5 V12.5 Z" fill="url(#fg)" stroke="#8B8443" stroke-width="1"/><path d="M1 13.4 H14.4 V3" stroke="#000" fill="none" stroke-width="1.3"/></svg>
<div style="position:absolute;left:61px;top:354px;font-size:11px;line-height:13px;white-space:nowrap">Дворецький</div>
<svg class="sv" style="left:40px;top:369px" width="15" height="14"><defs><linearGradient id="fg" x1="0" y1="0" x2="1" y2="1"><stop offset="0" stop-color="#FBF3A6"/><stop offset="1" stop-color="#F5CC84"/></linearGradient></defs><path d="M0.5 12.5 V2.5 L1.5 0.5 H5.5 L7 2.5 H13.5 V12.5 Z" fill="url(#fg)" stroke="#8B8443" stroke-width="1"/><path d="M1 13.4 H14.4 V3" stroke="#000" fill="none" stroke-width="1.3"/></svg>
<div style="position:absolute;left:61px;top:370px;font-size:11px;line-height:13px;white-space:nowrap">Дем'янчука</div>
<svg class="sv" style="left:40px;top:385px" width="15" height="14"><defs><linearGradient id="fg" x1="0" y1="0" x2="1" y2="1"><stop offset="0" stop-color="#FBF3A6"/><stop offset="1" stop-color="#F5CC84"/></linearGradient></defs><path d="M0.5 12.5 V2.5 L1.5 0.5 H5.5 L7 2.5 H13.5 V12.5 Z" fill="url(#fg)" stroke="#8B8443" stroke-width="1"/><path d="M1 13.4 H14.4 V3" stroke="#000" fill="none" stroke-width="1.3"/></svg>
<div style="position:absolute;left:61px;top:386px;font-size:11px;line-height:13px;white-space:nowrap">Директорії</div>
<svg class="sv" style="left:40px;top:401px" width="15" height="14"><defs><linearGradient id="fg" x1="0" y1="0" x2="1" y2="1"><stop offset="0" stop-color="#FBF3A6"/><stop offset="1" stop-color="#F5CC84"/></linearGradient></defs><path d="M0.5 12.5 V2.5 L1.5 0.5 H5.5 L7 2.5 H13.5 V12.5 Z" fill="url(#fg)" stroke="#8B8443" stroke-width="1"/><path d="M1 13.4 H14.4 V3" stroke="#000" fill="none" stroke-width="1.3"/></svg>
<div style="position:absolute;left:61px;top:402px;font-size:11px;line-height:13px;white-space:nowrap">Дорошенка</div>
<svg class="sv" style="left:40px;top:417px" width="15" height="14"><defs><linearGradient id="fg" x1="0" y1="0" x2="1" y2="1"><stop offset="0" stop-color="#FBF3A6"/><stop offset="1" stop-color="#F5CC84"/></linearGradient></defs><path d="M0.5 12.5 V2.5 L1.5 0.5 H5.5 L7 2.5 H13.5 V12.5 Z" fill="url(#fg)" stroke="#8B8443" stroke-width="1"/><path d="M1 13.4 H14.4 V3" stroke="#000" fill="none" stroke-width="1.3"/></svg>
<div style="position:absolute;left:61px;top:418px;font-size:11px;line-height:13px;white-space:nowrap">Драганчука</div>
<svg class="sv" style="left:40px;top:433px" width="15" height="14"><defs><linearGradient id="fg" x1="0" y1="0" x2="1" y2="1"><stop offset="0" stop-color="#FBF3A6"/><stop offset="1" stop-color="#F5CC84"/></linearGradient></defs><path d="M0.5 12.5 V2.5 L1.5 0.5 H5.5 L7 2.5 H13.5 V12.5 Z" fill="url(#fg)" stroke="#8B8443" stroke-width="1"/><path d="M1 13.4 H14.4 V3" stroke="#000" fill="none" stroke-width="1.3"/></svg>
<div style="position:absolute;left:61px;top:434px;font-size:11px;line-height:13px;white-space:nowrap">Драгоманова</div>
<svg class="sv" style="left:40px;top:449px" width="15" height="14"><defs><linearGradient id="fg" x1="0" y1="0" x2="1" y2="1"><stop offset="0" stop-color="#FBF3A6"/><stop offset="1" stop-color="#F5CC84"/></linearGradient></defs><path d="M0.5 12.5 V2.5 L1.5 0.5 H5.5 L7 2.5 H13.5 V12.5 Z" fill="url(#fg)" stroke="#8B8443" stroke-width="1"/><path d="M1 13.4 H14.4 V3" stroke="#000" fill="none" stroke-width="1.3"/></svg>
<div style="position:absolute;left:61px;top:450px;font-size:11px;line-height:13px;white-space:nowrap">Древлянська</div>
<svg class="sv" style="left:40px;top:465px" width="15" height="14"><defs><linearGradient id="fg" x1="0" y1="0" x2="1" y2="1"><stop offset="0" stop-color="#FBF3A6"/><stop offset="1" stop-color="#F5CC84"/></linearGradient></defs><path d="M0.5 12.5 V2.5 L1.5 0.5 H5.5 L7 2.5 H13.5 V12.5 Z" fill="url(#fg)" stroke="#8B8443" stroke-width="1"/><path d="M1 13.4 H14.4 V3" stroke="#000" fill="none" stroke-width="1.3"/></svg>
<div style="position:absolute;left:61px;top:466px;font-size:11px;line-height:13px;white-space:nowrap">Дубенська</div>
<svg class="sv" style="left:40px;top:481px" width="15" height="14"><defs><linearGradient id="fg" x1="0" y1="0" x2="1" y2="1"><stop offset="0" stop-color="#FBF3A6"/><stop offset="1" stop-color="#F5CC84"/></linearGradient></defs><path d="M0.5 12.5 V2.5 L1.5 0.5 H5.5 L7 2.5 H13.5 V12.5 Z" fill="url(#fg)" stroke="#8B8443" stroke-width="1"/><path d="M1 13.4 H14.4 V3" stroke="#000" fill="none" stroke-width="1.3"/></svg>
<div style="position:absolute;left:61px;top:482px;font-size:11px;line-height:13px;white-space:nowrap">Дундича</div>
<svg class="sv" style="left:40px;top:497px" width="15" height="14"><defs><linearGradient id="fg" x1="0" y1="0" x2="1" y2="1"><stop offset="0" stop-color="#FBF3A6"/><stop offset="1" stop-color="#F5CC84"/></linearGradient></defs><path d="M0.5 12.5 V2.5 L1.5 0.5 H5.5 L7 2.5 H13.5 V12.5 Z" fill="url(#fg)" stroke="#8B8443" stroke-width="1"/><path d="M1 13.4 H14.4 V3" stroke="#000" fill="none" stroke-width="1.3"/></svg>
<div style="position:absolute;left:61px;top:498px;font-size:11px;line-height:13px;white-space:nowrap">Жукова</div>
<svg class="sv" style="left:40px;top:513px" width="15" height="14"><defs><linearGradient id="fg" x1="0" y1="0" x2="1" y2="1"><stop offset="0" stop-color="#FBF3A6"/><stop offset="1" stop-color="#F5CC84"/></linearGradient></defs><path d="M0.5 12.5 V2.5 L1.5 0.5 H5.5 L7 2.5 H13.5 V12.5 Z" fill="url(#fg)" stroke="#8B8443" stroke-width="1"/><path d="M1 13.4 H14.4 V3" stroke="#000" fill="none" stroke-width="1.3"/></svg>
<div style="position:absolute;left:61px;top:514px;font-size:11px;line-height:13px;white-space:nowrap">Жуковського</div>
<svg class="sv" style="left:40px;top:529px" width="15" height="14"><defs><linearGradient id="fg" x1="0" y1="0" x2="1" y2="1"><stop offset="0" stop-color="#FBF3A6"/><stop offset="1" stop-color="#F5CC84"/></linearGradient></defs><path d="M0.5 12.5 V2.5 L1.5 0.5 H5.5 L7 2.5 H13.5 V12.5 Z" fill="url(#fg)" stroke="#8B8443" stroke-width="1"/><path d="M1 13.4 H14.4 V3" stroke="#000" fill="none" stroke-width="1.3"/></svg>
<div style="position:absolute;left:61px;top:530px;font-size:11px;line-height:13px;white-space:nowrap">Замкова</div>
</div>
<div style="position:absolute;left:18px;top:144px;width:9px;height:9px;background:#fff;border:1px solid #808080"></div>
<div style="position:absolute;left:20px;top:148px;width:5px;height:1px;background:#000"></div>
<div style="position:absolute;left:46px;top:153px;width:89px;height:28px;border:5px solid #EE1C25"></div>
<div style="position:absolute;left:211px;top:124px;font-size:11px;line-height:13px;color:#000;white-space:nowrap;">Фильтры:</div>
<div style="position:absolute;left:1038px;width:200px;text-align:right;top:124px;font-size:11px;line-height:13px;color:#000;white-space:nowrap;">всего 4 (включено 0)</div>
<div style="position:absolute;left:210px;top:139px;width:1029px;height:93px;background:#fff;border-top:1px solid #A0A0A0;border-left:1px solid #A0A0A0;border-right:1px solid #fff;border-bottom:1px solid #fff;"></div>
<div style="position:absolute;left:211px;top:140px;width:1027px;height:91px;border-top:1px solid #696969;border-left:1px solid #696969;border-right:1px solid #E3E3E3;border-bottom:1px solid #E3E3E3;"></div>
<div style="position:absolute;left:212px;top:141px;width:1009px;height:16px;background:#FBFBFB"></div>
<div style="position:absolute;left:212px;top:158px;width:18px;height:73px;background:#FAFAFA"></div>
<div style="position:absolute;left:212px;top:157px;width:1009px;height:1px;background:#ECECEC"></div>
<div style="position:absolute;left:212px;top:172px;width:1009px;height:1px;background:#D5D5D5"></div>
<div style="position:absolute;left:212px;top:187px;width:1009px;height:1px;background:#D5D5D5"></div>
<div style="position:absolute;left:212px;top:202px;width:1009px;height:1px;background:#D5D5D5"></div>
<div style="position:absolute;left:212px;top:217px;width:1009px;height:1px;background:#D5D5D5"></div>
<div style="position:absolute;left:230px;top:157px;width:1px;height:74px;background:#D5D5D5"></div>
<div style="position:absolute;left:286px;top:157px;width:1px;height:74px;background:#D5D5D5"></div>
<div style="position:absolute;left:443px;top:157px;width:1px;height:74px;background:#D5D5D5"></div>
<div style="position:absolute;left:547px;top:157px;width:1px;height:74px;background:#D5D5D5"></div>
<div style="position:absolute;left:236px;top:143px;font-size:11px;line-height:13px;color:#000;white-space:nowrap;">Включен</div>
<div style="position:absolute;left:290px;top:143px;font-size:11px;line-height:13px;color:#000;white-space:nowrap;">Поле</div>
<div style="position:absolute;left:447px;top:143px;font-size:11px;line-height:13px;color:#000;white-space:nowrap;">Условие</div>
<div style="position:absolute;left:551px;top:143px;font-size:11px;line-height:13px;color:#000;white-space:nowrap;">Значение</div>
<div style="position:absolute;left:252px;top:158px;width:13px;height:13px;background:#fff;border:1px solid #767676"></div>
<div style="position:absolute;left:290px;top:159px;font-size:11px;line-height:13px;color:#A0A0A0;white-space:nowrap;">Район</div>
<div style="position:absolute;left:447px;top:159px;font-size:11px;line-height:13px;color:#A0A0A0;white-space:nowrap;">=</div>
<div style="position:absolute;left:551px;top:159px;font-size:11px;line-height:13px;color:#A0A0A0;white-space:nowrap;">6</div>
<div style="position:absolute;left:252px;top:173px;width:13px;height:13px;background:#fff;border:1px solid #767676"></div>
<div style="position:absolute;left:290px;top:174px;font-size:11px;line-height:13px;color:#A0A0A0;white-space:nowrap;">Town</div>
<div style="position:absolute;left:447px;top:174px;font-size:11px;line-height:13px;color:#A0A0A0;white-space:nowrap;">=</div>
<div style="position:absolute;left:551px;top:174px;font-size:11px;line-height:13px;color:#A0A0A0;white-space:nowrap;">Рівне</div>
<div style="position:absolute;left:252px;top:188px;width:13px;height:13px;background:#fff;border:1px solid #767676"></div>
<div style="position:absolute;left:290px;top:189px;font-size:11px;line-height:13px;color:#A0A0A0;white-space:nowrap;">Назва вулиці</div>
<div style="position:absolute;left:447px;top:189px;font-size:11px;line-height:13px;color:#A0A0A0;white-space:nowrap;">=</div>
<div style="position:absolute;left:551px;top:189px;font-size:11px;line-height:13px;color:#A0A0A0;white-space:nowrap;">16-Липня</div>
<div style="position:absolute;left:252px;top:203px;width:13px;height:13px;background:#fff;border:1px solid #767676"></div>
<div style="position:absolute;left:290px;top:204px;font-size:11px;line-height:13px;color:#A0A0A0;white-space:nowrap;">Тип будинку</div>
<div style="position:absolute;left:447px;top:204px;font-size:11px;line-height:13px;color:#A0A0A0;white-space:nowrap;">=</div>
<div style="position:absolute;left:252px;top:218px;width:13px;height:13px;background:#fff;border:1px solid #767676"></div>
<svg class="sv" style="left:219px;top:191px" width="7" height="10"><path d="M0 0 L6 5 L0 10 Z" fill="#000"/></svg>
<svg class="sv" style="left:216px;top:219px" width="10" height="10"><path d="M5 0.5 V9.5 M1 2.5 L9 7.5 M9 2.5 L1 7.5" stroke="#000" stroke-width="1.2"/></svg>
<div style="position:absolute;left:428px;top:188px;width:15px;height:14px;background:#E5E5E5;border:1px solid #ACACAC"></div>
<svg class="sv" style="left:428px;top:188px" width="15" height="14"><path d="M4 5.5 L7.5 9 L11 5.5" fill="none" stroke="#404040" stroke-width="1.6"/></svg>
<div style="position:absolute;left:1221px;top:141px;width:16px;height:90px;background:#F0F0F0"></div>
<div style="position:absolute;left:1221px;top:158px;width:15px;height:45px;background:#CDCDCD"></div>
<svg class="sv" style="left:1221px;top:141px" width="16" height="16"><path d="M4.5 10 L8 6.5 L11.5 10" fill="none" stroke="#606060" stroke-width="1.8"/></svg>
<svg class="sv" style="left:1221px;top:214px" width="16" height="16"><path d="M4.5 6.5 L8 10 L11.5 6.5" fill="none" stroke="#606060" stroke-width="1.8"/></svg>
<div style="position:absolute;left:1247px;top:140px;width:105px;height:19px;background:linear-gradient(#F0F0F0,#E5E5E5);border:1px solid #ACACAC"></div>
<div style="position:absolute;left:1247px;top:143px;width:105px;text-align:center;font-size:11px;line-height:13px;color:#000;font-weight:bold;letter-spacing:0.4px;white-space:nowrap">Обновить</div>
<div style="position:absolute;left:1247px;top:164px;width:105px;height:19px;background:linear-gradient(#F0F0F0,#E5E5E5);border:1px solid #ACACAC"></div>
<div style="position:absolute;left:1247px;top:167px;width:105px;text-align:center;font-size:11px;line-height:13px;color:#000;white-space:nowrap">Добавить фильтр</div>
<div style="position:absolute;left:1247px;top:188px;width:105px;height:19px;background:linear-gradient(#F0F0F0,#E5E5E5);border:1px solid #ACACAC"></div>
<div style="position:absolute;left:1247px;top:191px;width:105px;text-align:center;font-size:11px;line-height:13px;color:#000;white-space:nowrap">Удалить фильтр</div>
<div style="position:absolute;left:1247px;top:212px;width:105px;height:19px;background:linear-gradient(#F0F0F0,#E5E5E5);border:1px solid #ACACAC"></div>
<div style="position:absolute;left:1247px;top:215px;width:105px;text-align:center;font-size:11px;line-height:13px;color:#000;white-space:nowrap">Удалить все...</div>
<div style="position:absolute;left:210px;top:239px;width:1143px;height:18px;border-top:1px solid #A0A0A0;border-left:1px solid #A0A0A0;border-right:1px solid #fff;border-bottom:1px solid #fff;"></div>
<svg class="sv" style="left:217px;top:243px" width="10" height="10"><rect x="0.5" y="0.5" width="9" height="9" fill="#F4F8FF" stroke="#4A6AB0"/><rect x="1" y="1" width="8" height="2" fill="#6A8AD0"/><path d="M2 5 H4.5 M5.5 5 H8 M2 7.5 H4.5 M5.5 7.5 H8" stroke="#9AB0D8"/></svg>
<div style="position:absolute;left:233px;top:242px;font-size:11px;line-height:13px;color:#000;white-space:nowrap;font-weight:bold;letter-spacing:0.45px;">Адресація</div>
<div style="position:absolute;left:397px;top:242px;font-size:11px;line-height:13px;color:#7A4812;white-space:nowrap;">Детальна адресація будинків</div>
<div style="position:absolute;left:1049px;width:300px;text-align:right;top:242px;font-size:11px;line-height:13px;color:#12124E;white-space:nowrap;">1/2 (отфильтровано) всего 742</div>
<div style="position:absolute;left:210px;top:259px;width:1143px;height:249px;background:#F0F0F0;border-top:1px solid #A0A0A0;border-left:1px solid #A0A0A0;border-right:1px solid #fff;border-bottom:1px solid #fff;"></div>
<div style="position:absolute;left:211px;top:260px;width:1141px;height:247px;border-top:1px solid #696969;border-left:1px solid #696969;border-right:1px solid #E3E3E3;border-bottom:1px solid #E3E3E3;"></div>
<div style="position:absolute;left:212px;top:261px;width:1140px;height:17px;background:#FBFBFB"></div>
<div style="position:absolute;left:212px;top:278px;width:1140px;height:14px;background:#C9E2FB"></div>
<div style="position:absolute;left:212px;top:292px;width:1140px;height:14px;background:#fff"></div>
<div style="position:absolute;left:212px;top:278px;width:19px;height:28px;background:#F7F7F7"></div>
<div style="position:absolute;left:321px;top:292px;width:205px;height:13px;background:#FEFFCF"></div>
<div style="position:absolute;left:212px;top:277px;width:1140px;height:1px;background:#D5D5D5"></div>
<div style="position:absolute;left:212px;top:291px;width:1140px;height:1px;background:#D5D5D5"></div>
<div style="position:absolute;left:212px;top:305px;width:1140px;height:1px;background:#D5D5D5"></div>
<div style="position:absolute;left:230px;top:278px;width:1px;height:28px;background:#D5D5D5"></div>
<div style="position:absolute;left:256px;top:278px;width:1px;height:28px;background:#D5D5D5"></div>
<div style="position:absolute;left:320px;top:278px;width:1px;height:28px;background:#D5D5D5"></div>
<div style="position:absolute;left:423px;top:278px;width:1px;height:28px;background:#D5D5D5"></div>
<div style="position:absolute;left:526px;top:278px;width:1px;height:28px;background:#D5D5D5"></div>
<div style="position:absolute;left:563px;top:278px;width:1px;height:28px;background:#D5D5D5"></div>
<div style="position:absolute;left:622px;top:278px;width:1px;height:28px;background:#D5D5D5"></div>
<div style="position:absolute;left:843px;top:278px;width:1px;height:28px;background:#D5D5D5"></div>
<div style="position:absolute;left:926px;top:278px;width:1px;height:28px;background:#D5D5D5"></div>
<div style="position:absolute;left:1028px;top:278px;width:1px;height:28px;background:#D5D5D5"></div>
<div style="position:absolute;left:1134px;top:278px;width:1px;height:28px;background:#D5D5D5"></div>
<div style="position:absolute;left:1225px;top:278px;width:1px;height:28px;background:#D5D5D5"></div>
<div style="position:absolute;left:1302px;top:278px;width:1px;height:28px;background:#D5D5D5"></div>
<div style="position:absolute;left:243px;top:263px;font-size:11px;line-height:13px;color:#000;white-space:nowrap;">ID</div>
<div style="position:absolute;left:259px;top:263px;font-size:11px;line-height:13px;color:#000;white-space:nowrap;">Ідентиф...</div>
<div style="position:absolute;left:323px;top:263px;font-size:11px;line-height:13px;color:#000;white-space:nowrap;">Тип населеного ...</div>
<div style="position:absolute;left:426px;top:263px;font-size:11px;line-height:13px;color:#000;white-space:nowrap;">Населений пункт</div>
<div style="position:absolute;left:530px;top:263px;font-size:11px;line-height:13px;color:#000;white-space:nowrap;">Район</div>
<div style="position:absolute;left:567px;top:263px;font-size:11px;line-height:13px;color:#701212;white-space:nowrap;">Тип вулиці</div>
<div style="position:absolute;left:625px;top:263px;font-size:11px;line-height:13px;color:#000;white-space:nowrap;">Назва вулиці</div>
<div style="position:absolute;left:846px;top:263px;font-size:11px;line-height:13px;color:#000;white-space:nowrap;">Номер будинку</div>
<div style="position:absolute;left:930px;top:263px;font-size:11px;line-height:13px;color:#000;white-space:nowrap;">Тип будинку</div>
<div style="position:absolute;left:1042px;top:263px;font-size:11px;line-height:13px;color:#000;white-space:nowrap;">Кількість квартир</div>
<div style="position:absolute;left:1137px;top:263px;font-size:11px;line-height:13px;color:#000;white-space:nowrap;">Будинок на карті</div>
<div style="position:absolute;left:1229px;top:263px;font-size:11px;line-height:13px;color:#000;white-space:nowrap;">Фото будинку</div>
<div style="position:absolute;left:1329px;top:261px;width:23px;height:16px;overflow:hidden"><div style="position:absolute;left:0;top:2px;font-size:11px;line-height:13px;white-space:nowrap">Індекс</div></div>
<svg class="sv" style="left:310px;top:265px" width="9" height="8"><path d="M0.5 0.5 H8.5 L4.5 7.5 Z" fill="#A8A8A8"/></svg>
<svg class="sv" style="left:219px;top:279px" width="7" height="11"><path d="M0 0 L6 5 L0 10 Z" fill="#000"/></svg>
<div style="position:absolute;left:225px;width:30px;text-align:right;top:279px;font-size:11px;line-height:13px;color:#000;white-space:nowrap;">162</div>
<div style="position:absolute;left:279px;width:40px;text-align:right;top:279px;font-size:11px;line-height:13px;color:#000;white-space:nowrap;">824</div>
<div style="position:absolute;left:323px;top:279px;font-size:11px;line-height:13px;color:#000;white-space:nowrap;">місто</div>
<div style="position:absolute;left:426px;top:279px;font-size:11px;line-height:13px;color:#000;white-space:nowrap;">Рівне</div>
<div style="position:absolute;left:530px;top:279px;font-size:11px;line-height:13px;color:#000;white-space:nowrap;">6</div>
<div style="position:absolute;left:567px;top:279px;font-size:11px;line-height:13px;color:#000;white-space:nowrap;">вулиця</div>
<div style="position:absolute;left:625px;top:279px;font-size:11px;line-height:13px;color:#000;white-space:nowrap;">16-Липня</div>
<div style="position:absolute;left:846px;top:279px;font-size:11px;line-height:13px;color:#000;white-space:nowrap;">58</div>
<div style="position:absolute;left:930px;top:279px;font-size:11px;line-height:13px;color:#000;white-space:nowrap;">Багатоквартирний</div>
<div style="position:absolute;left:1092px;width:40px;text-align:right;top:279px;font-size:11px;line-height:13px;color:#000;white-space:nowrap;">11</div>
<div style="position:absolute;left:225px;width:30px;text-align:right;top:293px;font-size:11px;line-height:13px;color:#A0A0A0;white-space:nowrap;">163</div>
<div style="position:absolute;left:279px;width:40px;text-align:right;top:293px;font-size:11px;line-height:13px;color:#000;white-space:nowrap;">824</div>
<div style="position:absolute;left:323px;top:293px;font-size:11px;line-height:13px;color:#000;white-space:nowrap;">місто</div>
<div style="position:absolute;left:426px;top:293px;font-size:11px;line-height:13px;color:#000;white-space:nowrap;">Рівне</div>
<div style="position:absolute;left:530px;top:293px;font-size:11px;line-height:13px;color:#000;white-space:nowrap;">6</div>
<div style="position:absolute;left:567px;top:293px;font-size:11px;line-height:13px;color:#000;white-space:nowrap;">вулиця</div>
<div style="position:absolute;left:625px;top:293px;font-size:11px;line-height:13px;color:#000;white-space:nowrap;">16-Липня</div>
<div style="position:absolute;left:846px;top:293px;font-size:11px;line-height:13px;color:#000;white-space:nowrap;">2А</div>
<div style="position:absolute;left:930px;top:293px;font-size:11px;line-height:13px;color:#000;white-space:nowrap;">Багатоквартирний</div>
<div style="position:absolute;left:1092px;width:40px;text-align:right;top:293px;font-size:11px;line-height:13px;color:#000;white-space:nowrap;">16</div>
<div style="position:absolute;left:927px;top:278px;width:101px;height:13px;border:1px solid #000"></div>
<div style="position:absolute;left:213px;top:459px;width:1139px;height:32px;background:#FCFCFC"></div>
<div style="position:absolute;left:213px;top:459px;width:18px;height:32px;background:#F7F7F7"></div>
<svg class="sv" style="left:216px;top:470px" width="10" height="11"><path d="M9 2 V0.8 H1 L5.2 5.5 L1 10.2 H9 V9" fill="none" stroke="#000" stroke-width="1.4"/></svg>
<div style="position:absolute;left:1092px;width:40px;text-align:right;top:469px;font-size:11px;line-height:13px;color:#5E1010;white-space:nowrap;">27</div>
<div style="position:absolute;left:213px;top:491px;width:1139px;height:16px;background:#F0F0F0"></div>
<div style="position:absolute;left:229px;top:491px;width:553px;height:16px;background:#CDCDCD"></div>
<svg class="sv" style="left:213px;top:491px" width="16" height="16"><path d="M10 4.5 L6.5 8 L10 11.5" fill="none" stroke="#606060" stroke-width="1.8"/></svg>
<svg class="sv" style="left:1336px;top:491px" width="16" height="16"><path d="M6.5 4.5 L10 8 L6.5 11.5" fill="none" stroke="#606060" stroke-width="1.8"/></svg>
<div style="position:absolute;left:610px;top:450px;width:244px;height:45px;background:#FCFCFC;border:5px solid #EE1C25"></div>
<div style="position:absolute;left:626px;top:463px;font-size:11px;line-height:13px;color:#5E0E0E;white-space:nowrap;">Кількість багатоквартирних будинків: 739</div>
<div style="position:absolute;left:626px;top:477px;font-size:11px;line-height:13px;color:#5E0E0E;white-space:nowrap;">Кількість приватних будинків: 0</div>
<div style="position:absolute;left:210px;top:538px;width:1px;height:158px;background:#fff"></div>
<div style="position:absolute;left:210px;top:538px;width:873px;height:1px;background:#fff"></div>
<div style="position:absolute;left:1081px;top:538px;width:1px;height:158px;background:#A0A0A0"></div>
<div style="position:absolute;left:1082px;top:538px;width:1px;height:158px;background:#696969"></div>
<div style="position:absolute;left:210px;top:694px;width:873px;height:1px;background:#A0A0A0"></div>
<div style="position:absolute;left:210px;top:695px;width:873px;height:1px;background:#696969"></div>
<div style="position:absolute;left:210px;top:518px;width:141px;height:21px;background:#F0F0F0;border-top:1px solid #fff;border-left:1px solid #fff;"></div>
<div style="position:absolute;left:349px;top:519px;width:1px;height:20px;background:#A0A0A0"></div>
<div style="position:absolute;left:350px;top:520px;width:1px;height:19px;background:#696969"></div>
<svg class="sv" style="left:218px;top:522px" width="12" height="11"><path d="M1.5 5 L2.5 9.5 L11 1.5" fill="none" stroke="#127A12" stroke-width="2.2" stroke-linejoin="bevel"/></svg>
<div style="position:absolute;left:241px;top:522px;font-size:11px;line-height:13px;color:#000;white-space:nowrap;">Деталізація будинку</div>
<div style="position:absolute;left:1090px;top:538px;width:1px;height:158px;background:#fff"></div>
<div style="position:absolute;left:1090px;top:538px;width:264px;height:1px;background:#fff"></div>
<div style="position:absolute;left:1352px;top:538px;width:1px;height:158px;background:#A0A0A0"></div>
<div style="position:absolute;left:1353px;top:538px;width:1px;height:158px;background:#696969"></div>
<div style="position:absolute;left:1090px;top:694px;width:264px;height:1px;background:#A0A0A0"></div>
<div style="position:absolute;left:1090px;top:695px;width:264px;height:1px;background:#696969"></div>
<div style="position:absolute;left:1090px;top:518px;width:86px;height:21px;background:#F0F0F0;border-top:1px solid #fff;border-left:1px solid #fff;"></div>
<div style="position:absolute;left:1174px;top:519px;width:1px;height:20px;background:#A0A0A0"></div>
<div style="position:absolute;left:1175px;top:520px;width:1px;height:19px;background:#696969"></div>
<div style="position:absolute;left:1098px;top:522px;font-size:11px;line-height:13px;color:#000;white-space:nowrap;">Фото будинку</div>
<div style="position:absolute;left:218px;top:545px;width:778px;height:143px;background:#F0F0F0;border-top:1px solid #A0A0A0;border-left:1px solid #A0A0A0;border-right:1px solid #fff;border-bottom:1px solid #fff;"></div>
<div style="position:absolute;left:219px;top:546px;width:776px;height:141px;border-top:1px solid #696969;border-left:1px solid #696969;border-right:1px solid #E3E3E3;border-bottom:1px solid #E3E3E3;"></div>
<div style="position:absolute;left:220px;top:547px;width:774px;height:15px;background:#FCFCFC"></div>
<div style="position:absolute;left:220px;top:562px;width:215px;height:17px;background:#FBFBFB"></div>
<div style="position:absolute;left:220px;top:562px;width:19px;height:17px;background:#F7F7F7"></div>
<svg class="sv" style="left:521px;top:550px" width="10" height="9"><rect x="0.5" y="0.5" width="9" height="8" fill="#fff" stroke="#1A1A5A"/><rect x="1" y="1" width="8" height="1.5" fill="#1A1A5A"/><path d="M2 4.5 H4 M5.5 4.5 H8 M2 6.5 H4 M5.5 6.5 H8" stroke="#8080A0"/></svg>
<div style="position:absolute;left:537px;top:548px;font-size:11px;line-height:13px;color:#000;white-space:nowrap;font-weight:bold;letter-spacing:0.7px;">Деталізація будинку (0/0)</div>
<div style="position:absolute;left:246px;top:565px;font-size:11px;line-height:13px;color:#000;white-space:nowrap;">ID</div>
<svg class="sv" style="left:258px;top:568px" width="9" height="7"><path d="M4.5 0.5 L8.5 6.5 H0.5 Z" fill="#A8A8A8"/></svg>
<div style="position:absolute;left:293px;top:565px;font-size:11px;line-height:13px;color:#000;white-space:nowrap;">Номер під’їзду</div>
<div style="position:absolute;left:374px;top:565px;font-size:11px;line-height:13px;color:#888;white-space:nowrap;">Ідентифік...</div>
<div style="position:absolute;left:1003px;top:550px;width:70px;height:19px;background:linear-gradient(#F0F0F0,#E5E5E5);border:1px solid #ACACAC"></div>
<div style="position:absolute;left:1003px;top:553px;width:70px;text-align:center;font-size:11px;line-height:13px;color:#000;font-weight:bold;letter-spacing:0.4px;white-space:nowrap">Добавить</div>
<div style="position:absolute;left:1003px;top:574px;width:70px;height:19px;background:#F4F4F4;border:1px solid #DCDCDC"></div>
<div style="position:absolute;left:1003px;top:577px;width:70px;text-align:center;font-size:11px;line-height:13px;color:#8E8E8E;white-space:nowrap">Изменить</div>
<div style="position:absolute;left:1003px;top:598px;width:70px;height:19px;background:#F4F4F4;border:1px solid #DCDCDC"></div>
<div style="position:absolute;left:1003px;top:601px;width:70px;text-align:center;font-size:11px;line-height:13px;color:#8E8E8E;white-space:nowrap">Удалить</div>
<div style="position:absolute;left:1097px;top:545px;width:170px;height:143px;background:#F0F0F0;border-top:1px solid #A0A0A0;border-left:1px solid #A0A0A0;border-right:1px solid #fff;border-bottom:1px solid #fff;"></div>
<div style="position:absolute;left:1098px;top:546px;width:168px;height:141px;border-top:1px solid #696969;border-left:1px solid #696969;border-right:1px solid #E3E3E3;border-bottom:1px solid #E3E3E3;"></div>
<div style="position:absolute;left:1273px;top:550px;width:70px;height:19px;background:linear-gradient(#F0F0F0,#E5E5E5);border:1px solid #ACACAC"></div>
<div style="position:absolute;left:1273px;top:553px;width:70px;text-align:center;font-size:11px;line-height:13px;color:#000;white-space:nowrap">Назначить</div>
<div style="position:absolute;left:1273px;top:574px;width:70px;height:19px;background:#F4F4F4;border:1px solid #DCDCDC"></div>
<div style="position:absolute;left:1273px;top:577px;width:70px;text-align:center;font-size:11px;line-height:13px;color:#8E8E8E;white-space:nowrap">Очистить</div>
<div style="position:absolute;left:1273px;top:598px;width:70px;height:19px;background:#F4F4F4;border:1px solid #DCDCDC"></div>
<div style="position:absolute;left:1273px;top:601px;width:70px;text-align:center;font-size:11px;line-height:13px;color:#8E8E8E;white-space:nowrap">Просмотр</div>
<div style="position:absolute;left:0px;top:709px;width:1366px;height:19px;background:#F0F0F0"></div>
<div style="position:absolute;left:5px;top:712px;font-size:11px;line-height:13px;color:#000;white-space:nowrap;">Готово</div>
<div style="position:absolute;left:0px;top:709px;width:796px;height:19px;border-top:1px solid #A0A0A0;border-left:1px solid #fff;border-right:1px solid #fff;"></div>
<div style="position:absolute;left:798px;top:709px;width:74px;height:19px;border-left:1px solid #A0A0A0;border-top:1px solid #A0A0A0;border-right:1px solid #fff;"></div>
<div style="position:absolute;left:802px;top:712px;font-size:11px;line-height:13px;color:#000;white-space:nowrap;">MS SQL 11.00</div>
<div style="position:absolute;left:874px;top:709px;width:81px;height:19px;border-left:1px solid #A0A0A0;border-top:1px solid #A0A0A0;border-right:1px solid #fff;"></div>
<div style="position:absolute;left:878px;top:712px;font-size:11px;line-height:13px;color:#000;white-space:nowrap;">Media_Prospekt</div>
<div style="position:absolute;left:957px;top:709px;width:134px;height:19px;border-left:1px solid #A0A0A0;border-top:1px solid #A0A0A0;border-right:1px solid #fff;"></div>
<div style="position:absolute;left:961px;top:712px;font-size:11px;line-height:13px;color:#000;white-space:nowrap;letter-spacing:-0.3px;">RALYANOV\SQLEXPRESS</div>
<div style="position:absolute;left:1093px;top:709px;width:96px;height:19px;border-left:1px solid #A0A0A0;border-top:1px solid #A0A0A0;border-right:1px solid #fff;"></div>
<div style="position:absolute;left:1097px;top:712px;font-size:11px;line-height:13px;color:#000;white-space:nowrap;letter-spacing:-0.3px;">Максим Ральянов</div>
<div style="position:absolute;left:1191px;top:709px;width:88px;height:19px;border-left:1px solid #A0A0A0;border-top:1px solid #A0A0A0;border-right:1px solid #fff;"></div>
<div style="position:absolute;left:1195px;top:712px;font-size:11px;line-height:13px;color:#000;white-space:nowrap;">Администратор</div>
<div style="position:absolute;left:1281px;top:709px;width:66px;height:19px;border-left:1px solid #A0A0A0;border-top:1px solid #A0A0A0;border-right:1px solid #fff;"></div>
<div style="position:absolute;left:1285px;top:712px;font-size:11px;line-height:13px;color:#000;white-space:nowrap;">22.11.2014</div>
<div style="position:absolute;left:0px;top:728px;width:1366px;height:40px;background:linear-gradient(90deg,#5C5A6E 0%,#5A5A72 17%,#5C5C72 22%,#6A5868 31.5%,#725468 35.4%,#826276 45%,#88707F 53.4%,#836E80 70%,#7E6878 87%,#8C7082 100%)"></div>
<div style="position:absolute;left:0px;top:728px;width:1366px;height:1px;background:rgba(40,30,50,0.35)"></div>
<svg class="sv" style="left:11px;top:734px" width="28" height="27"><path d="M1 4 L12 2.5 V12.5 H1 Z M13.5 2.3 L27 0.5 V12.5 H13.5 Z M1 14 H12 V24 L1 22.5 Z M13.5 14 H27 V26 L13.5 24.2 Z" fill="#fff"/></svg>
<div style="position:absolute;left:52px;top:729px;width:58px;height:38px;background:rgba(255,255,255,0.16);border:1px solid rgba(255,255,255,0.4)"></div>
<div style="position:absolute;left:362px;top:729px;width:58px;height:38px;background:rgba(255,255,255,0.16);border:1px solid rgba(255,255,255,0.4)"></div>
<div style="position:absolute;left:548px;top:729px;width:58px;height:38px;background:rgba(255,240,250,0.36);border:1px solid rgba(255,245,252,0.9)"></div>
<div style="position:absolute;left:796px;top:729px;width:58px;height:38px;background:rgba(255,255,255,0.16);border:1px solid rgba(255,255,255,0.4)"></div>
<svg class="sv" style="left:66px;top:732px" width="30" height="32"><ellipse cx="15" cy="16" rx="13.5" ry="15" fill="#E0282E"/><ellipse cx="15" cy="16" rx="13.5" ry="15" fill="none" stroke="#B5161C" stroke-width="1"/><ellipse cx="15" cy="16" rx="5" ry="11.5" fill="#77768A"/><ellipse cx="15" cy="16" rx="5" ry="11.5" fill="none" stroke="#A01016" stroke-width="1.2"/></svg>
<svg class="sv" style="left:128px;top:732px" width="31" height="31"><rect x="0" y="0" width="31" height="31" fill="#109A20"/><path d="M7 11 H24 L23 25 H8 Z" fill="#fff"/><path d="M11.5 11 V8.5 A4 4 0 0 1 19.5 8.5 V11" fill="none" stroke="#fff" stroke-width="1.6"/><rect x="11" y="14" width="4" height="4" fill="#109A20"/><rect x="16" y="14" width="4" height="4" fill="#109A20"/><rect x="11" y="19" width="4" height="4" fill="#109A20"/><rect x="16" y="19" width="4" height="4" fill="#109A20"/></svg>
<svg class="sv" style="left:190px;top:733px" width="31" height="31"><rect x="0.5" y="0.5" width="30" height="30" rx="7" fill="#B8773C"/><rect x="1.5" y="1.5" width="28" height="28" rx="6" fill="none" stroke="#E0A060" stroke-width="1"/><rect x="3" y="4" width="25" height="24" rx="3" fill="#8C8C8C"/><path d="M4 4 H24 L28 6 V12 H21 L19 14 H4 Z" fill="#4EA6D6"/><path d="M6 12 L12 6 L17 10 L22 5" fill="none" stroke="#E8F6FF" stroke-width="1.6"/><path d="M24 4 L28 6 V10 L25 9 Z" fill="#E8A020"/><text x="12.5" y="22" font-family="Liberation Sans" font-weight="bold" font-size="7.5" fill="#1E1E1E" text-anchor="middle">DOC</text><path d="M4 25.5 H27" stroke="#333" stroke-width="1"/><ellipse cx="16" cy="28" rx="5" ry="1.3" fill="#111"/></svg>
<svg class="sv" style="left:251px;top:732px" width="32" height="32"><defs><linearGradient id="ieg" x1="0" y1="0" x2="0" y2="1"><stop offset="0" stop-color="#8ADAFC"/><stop offset="1" stop-color="#1680D0"/></linearGradient></defs><path d="M21.6 23.5 A8.5 8.5 0 1 1 24.5 17.5" fill="none" stroke="url(#ieg)" stroke-width="6"/><path d="M10 16.5 H27" stroke="#3AA8EC" stroke-width="3.5"/><path d="M4 29 C-1 23 19 3 28 3.5 C32 4 30 9 27 13" fill="none" stroke="#F3C22B" stroke-width="2.6"/></svg>
<svg class="sv" style="left:313px;top:733px" width="32" height="30"><path d="M6 4 L28 1 V20 L6 18 Z" fill="#1A3FC8" stroke="#D8D8E0" stroke-width="2"/><path d="M9 6 L26 4 V11 Z" fill="#7FA0F0" opacity="0.6"/><rect x="1" y="9" width="5" height="16" fill="#C8C8D0"/><path d="M14 20 L12 26 H24 L22 20 Z" fill="#D8D8E0"/><ellipse cx="18" cy="27" rx="8" ry="2" fill="#E0E0E8"/></svg>
<svg class="sv" style="left:375px;top:733px" width="32" height="31"><path d="M1 4 H12 L14 7 H30 V28 H1 Z" fill="#E9C86A"/><rect x="4" y="2" width="3" height="2" fill="#3AA83A"/><rect x="9" y="3" width="3" height="2" fill="#D03030"/><rect x="22" y="4" width="3" height="2" fill="#3A7AD0"/><path d="M1 10 H30 V28 H1 Z" fill="#F7E08A"/><path d="M9 29 V19 H23 V29" fill="none" stroke="#4AA8E0" stroke-width="3"/></svg>
<svg class="sv" style="left:438px;top:733px" width="30" height="30"><defs><linearGradient id="dg" x1="0" y1="0" x2="0" y2="1"><stop offset="0" stop-color="#F4F2E0"/><stop offset="0.55" stop-color="#E8C070"/><stop offset="0.8" stop-color="#D0601A"/><stop offset="1" stop-color="#F0A030"/></linearGradient></defs><rect x="0.5" y="0.5" width="29" height="29" rx="7" fill="#B87A48"/><rect x="1.5" y="1.5" width="27" height="27" rx="6" fill="none" stroke="#E8B080"/><rect x="3" y="3" width="24" height="24" rx="4" fill="#FFFDF5"/><rect x="5" y="5" width="20" height="19" rx="2" fill="url(#dg)"/><circle cx="14.5" cy="11" r="5.5" fill="#8A8A80" opacity="0.8"/><circle cx="14.5" cy="11" r="1.5" fill="#111"/><path d="M15 12 L16 24" stroke="#222" stroke-width="1"/></svg>
<svg class="sv" style="left:500px;top:733px" width="30" height="30"><rect x="0.5" y="0.5" width="29" height="29" rx="7" fill="#D09048"/><circle cx="15" cy="15" r="12" fill="#2A2A2A"/><circle cx="15" cy="15" r="10" fill="#5A5A5A"/><circle cx="15" cy="15" r="7" fill="#3E3E3E"/><circle cx="15" cy="14.5" r="4" fill="#222"/><circle cx="14" cy="13.5" r="1.5" fill="#666"/></svg>
<svg class="sv" style="left:561px;top:733px" width="32" height="31"><rect x="0.5" y="0.5" width="21" height="14" fill="#1E2E5E"/><rect x="2" y="2" width="18" height="11" fill="#4A90D8"/><path d="M2 9 C8 6 12 10 20 7 V13 H2 Z" fill="#2A6AB8"/><path d="M4 6 L6 5.5 M7 5 L8 4.5" stroke="#fff" stroke-width="0.6"/><rect x="9" y="15" width="6" height="2" fill="#333"/><rect x="2" y="17" width="10" height="1.5" fill="#444"/><circle cx="24.5" cy="14" r="5" fill="#F0C040"/><path d="M18 28 C18 19 31 19 31 28 Z" fill="#C22020"/><circle cx="24.5" cy="16" r="3.6" fill="#F5C8A8"/><circle cx="13.5" cy="17" r="4.8" fill="#2A2A2A"/><circle cx="13.5" cy="18.5" r="4" fill="#F8D0B0"/><path d="M6 31 C6 22 21 22 21 31 Z" fill="#2EAA3E"/></svg>
<svg class="sv" style="left:627px;top:733px" width="23" height="30"><rect x="0.5" y="0.5" width="22" height="29" rx="2" fill="#A9D6F2" stroke="#5A9ACB"/><rect x="2.5" y="2.5" width="18" height="8" fill="#EAF4FC" stroke="#6A8AB0" stroke-width="0.6"/><rect x="2.5" y="2.5" width="18" height="1.5" fill="#F0A040"/><text x="18" y="9.5" font-family="Liberation Mono" font-size="6" fill="#334" text-anchor="end">0</text><rect x="3.0" y="13" width="3" height="2.6" fill="#F4FAFF"/><rect x="7.5" y="13" width="3" height="2.6" fill="#F4FAFF"/><rect x="12.0" y="13" width="3" height="2.6" fill="#2A6A9A"/><rect x="16.5" y="13" width="3" height="2.6" fill="#2A6A9A"/><rect x="3.0" y="17" width="3" height="2.6" fill="#F4FAFF"/><rect x="7.5" y="17" width="3" height="2.6" fill="#F4FAFF"/><rect x="12.0" y="17" width="3" height="2.6" fill="#2A6A9A"/><rect x="16.5" y="17" width="3" height="2.6" fill="#2A6A9A"/><rect x="3.0" y="21" width="3" height="2.6" fill="#F4FAFF"/><rect x="7.5" y="21" width="3" height="2.6" fill="#F4FAFF"/><rect x="12.0" y="21" width="3" height="2.6" fill="#2A6A9A"/><rect x="16.5" y="21" width="3" height="2.6" fill="#2A6A9A"/><rect x="3.0" y="25" width="3" height="2.6" fill="#F4FAFF"/><rect x="7.5" y="25" width="3" height="2.6" fill="#F4FAFF"/><rect x="12.0" y="25" width="3" height="2.6" fill="#2A6A9A"/><rect x="16.5" y="25" width="3" height="2.6" fill="#2A6A9A"/><rect x="16.5" y="21" width="3" height="6.6" fill="#E8A030"/></svg>
<svg class="sv" style="left:685px;top:733px" width="31" height="30"><path d="M4 1 H25 C28 1 30 3 30 6 V27 C30 29 29 29.5 27 29.5 H6 C3 29.5 1 28 1 25 V4 C1 2 2 1 4 1 Z" fill="#F2F8F0" stroke="#3A8A4A" stroke-width="0.8"/><path d="M3 3 H26 V13 L3 17 Z" fill="#BDE3B8"/><path d="M6 4 L13 14 L6 25 H11 L15.5 18 L20 25 H25 L18 14 L25 4 H20 L15.5 10.5 L11 4 Z" fill="#2A8A3A"/><path d="M16 20 H29 M16 23 H29 M16 26 H29" stroke="#9AC8A0" stroke-width="1"/></svg>
<svg class="sv" style="left:747px;top:733px" width="31" height="30"><path d="M9 5 H29 V28 H9 Z" fill="#F8F8F8" stroke="#B8B8C8" stroke-width="0.8"/><path d="M13 17 H28 M13 20 H28 M13 23 H28" stroke="#9AB0D8" stroke-width="1"/><path d="M1 2 H22 V22 H1 Z" fill="#1E50A8"/><path d="M1 2 H22 V9 H1 Z" fill="#3A78D0"/><path d="M3 5 L6.5 19 H9 L11.5 10 L14 19 H16.5 L20 5 H17 L15.3 14 L12.8 5 H10.3 L7.8 14 L6 5 Z" fill="#fff"/></svg>
<svg class="sv" style="left:808px;top:733px" width="34" height="31"><ellipse cx="15" cy="18" rx="14" ry="10" fill="#CFE0F0" stroke="#9AB0C8"/><circle cx="9" cy="17" r="2.3" fill="#E34A4A"/><circle cx="13" cy="12" r="2.3" fill="#4AAA4A"/><circle cx="19" cy="11" r="2.3" fill="#F0C020"/><circle cx="15" cy="22" r="2.6" fill="#9AA8B8"/><path d="M20 28 L31 4" stroke="#D89A3A" stroke-width="2.5"/><path d="M29 1 L33 3 L31 8 L28 6 Z" fill="#E8A040"/></svg>
<svg class="sv" style="left:1110px;top:739px" width="31" height="19"><rect x="1" y="1" width="29" height="17" rx="1.5" fill="none" stroke="#fff" stroke-width="2"/><rect x="4" y="4" width="3" height="3" fill="#fff"/><rect x="8" y="4" width="3" height="3" fill="#fff"/><rect x="12" y="4" width="3" height="3" fill="#fff"/><rect x="16" y="4" width="3" height="3" fill="#fff"/><rect x="20" y="4" width="3" height="3" fill="#fff"/><rect x="24" y="4" width="3" height="3" fill="#fff"/><rect x="4" y="8" width="3" height="3" fill="#fff"/><rect x="8" y="8" width="3" height="3" fill="#fff"/><rect x="12" y="8" width="3" height="3" fill="#fff"/><rect x="16" y="8" width="3" height="3" fill="#fff"/><rect x="20" y="8" width="3" height="3" fill="#fff"/><rect x="24" y="8" width="3" height="3" fill="#fff"/><rect x="7" y="12" width="17" height="3" fill="#fff"/></svg>
<svg class="sv" style="left:1154px;top:746px" width="10" height="6"><path d="M0.5 5.5 L4.5 1 L8.5 5.5 Z" fill="#E8E0EA"/></svg>
<svg class="sv" style="left:1175px;top:741px" width="17" height="16"><path d="M1 1 V4 M4 1 V4 M0 4 H5 V9 H3.5 V15 H1.5 V9 H0 Z" fill="#fff" stroke="#fff" stroke-width="0.8"/><rect x="8.5" y="2.5" width="7" height="12.5" fill="none" stroke="#fff" stroke-width="1.6"/><rect x="10.5" y="0.5" width="3" height="2" fill="#fff"/><rect x="10" y="5" width="4" height="8.5" fill="#fff"/></svg>
<svg class="sv" style="left:1199px;top:741px" width="17" height="16"><rect x="1" y="14.0" width="2" height="2.0" fill="#fff"/><rect x="4" y="11.5" width="2" height="4.5" fill="#fff"/><rect x="7" y="9.0" width="2" height="7.0" fill="#fff"/><rect x="10" y="6.5" width="2" height="9.5" fill="#fff"/><rect x="13" y="4.0" width="2" height="12.0" fill="#fff"/></svg>
<svg class="sv" style="left:1223px;top:741px" width="15" height="16"><path d="M1 5 H4 L8 1 V15 L4 11 H1 Z" fill="#fff"/><path d="M10 5 A4 4 0 0 1 10 11 M12 2.5 A7 7 0 0 1 12 13.5" fill="none" stroke="#fff" stroke-width="1.3"/></svg>
<div style="position:absolute;left:1253px;top:742px;font-size:12px;line-height:14px;color:#fff;white-space:nowrap">ENG</div>
<div style="position:absolute;left:1290px;top:734px;width:60px;text-align:center;font-size:12px;line-height:14px;color:#fff;white-space:nowrap;letter-spacing:-0.3px">20:28</div>
<div style="position:absolute;left:1290px;top:751px;width:60px;text-align:center;font-size:12px;line-height:14px;color:#fff;white-space:nowrap;letter-spacing:-0.5px">22.11.2014</div>
</body></html>
